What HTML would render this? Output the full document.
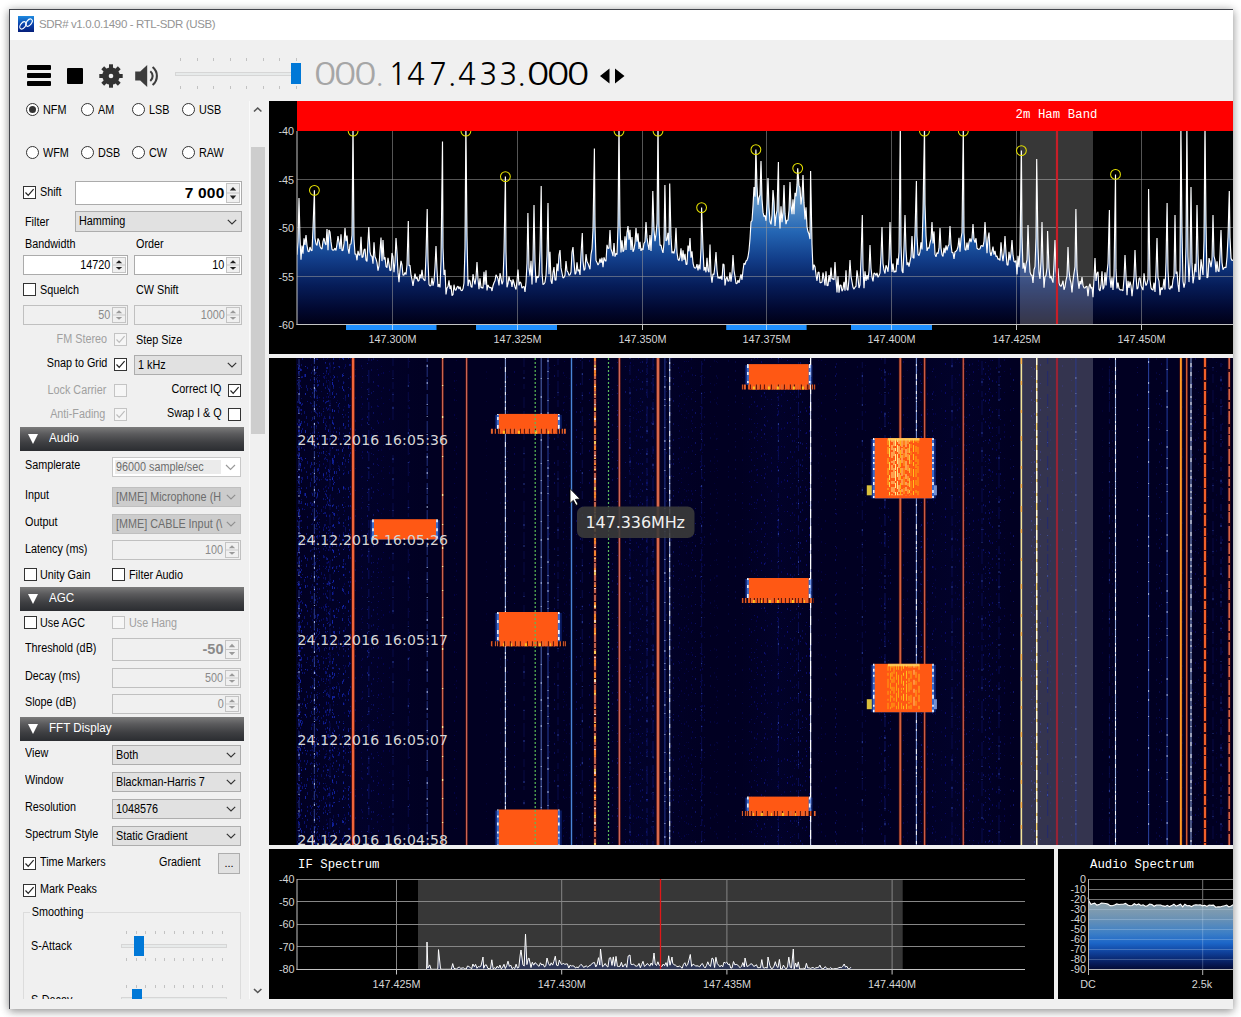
<!DOCTYPE html>
<html><head><meta charset="utf-8"><title>SDR# v1.0.0.1490 - RTL-SDR (USB)</title>
<style>
*{box-sizing:border-box;margin:0;padding:0}
html,body{width:1241px;height:1017px;overflow:hidden;background:#fff}
body{font-family:"Liberation Sans",sans-serif;font-size:11px;color:#000;position:relative}
#win{position:absolute;left:9px;top:9px;width:1224px;height:1000px;background:#f0f0f0;border-left:1px solid #43454c;border-top:1px solid #43454c;box-shadow:0 1px 9px 0 rgba(0,0,0,.3),0 3px 8px rgba(0,0,0,.2);overflow:hidden}
#page{position:absolute;left:0;top:0;width:1241px;height:1017px}
.a{position:absolute;white-space:nowrap}
#title{position:absolute;left:10px;top:10px;width:1223px;height:30px;background:#fff}
.lbl{position:absolute;white-space:nowrap;line-height:13px;height:13px;font-size:12px;transform:scaleX(.9);transform-origin:0 50%}
.r{text-align:right;transform-origin:100% 50%}
.dis{color:#a0a0a0}
.rad{position:absolute;width:13px;height:13px;border:1px solid #333;border-radius:50%;background:#fff}
.rad.on:after{content:"";position:absolute;left:2px;top:2px;width:7px;height:7px;border-radius:50%;background:#333}
.cb{position:absolute;width:13px;height:13px;border:1px solid #333;background:#fff}
.cb.d{border-color:#c4c4c4;background:#f6f6f6}
.cb svg{position:absolute;left:0;top:0}
.num{position:absolute;border:1px solid #ababab;background:#fff}
.num.d{background:#f0f0f0;border-color:#c0c0c0}
.num .v{position:absolute;right:16.5px;top:0;white-space:nowrap;font-size:12px;transform:scaleX(.9);transform-origin:100% 50%}
.spin{position:absolute;right:1px;top:1px;bottom:1px;width:14px;background:#f0f0f0;border:1px solid #c4c4c4}
.combo{position:absolute;border:1px solid #adadad;background:#e1e1e1}
.combo.d{background:#cccccc;border-color:#bfbfbf;color:#6d6d6d}
.combo .t{position:absolute;left:3px;top:0;white-space:nowrap;font-size:12px;transform:scaleX(.9);transform-origin:0 50%}
.combo svg{position:absolute;right:4px;top:50%;margin-top:-3px}
.hdr{position:absolute;left:20px;width:224px;height:24px;background:linear-gradient(#7b7b7b 0%,#5a5a5c 30%,#3e3f42 65%,#2b2d31 100%);color:#fff;font-size:12px}
.hdr span{position:absolute;left:29px;top:3.5px;line-height:14px;transform:scaleX(.97);transform-origin:0 50%}
.hdr i{position:absolute;left:8px;top:7px;width:0;height:0;border-left:5px solid transparent;border-right:5px solid transparent;border-top:10px solid #fff}
.tick{position:absolute;width:1px;height:3px;background:#c2c2c2}
</style></head>
<body>
<div id="win"></div>
<div id="page">
<div id="title"></div>
<svg class="a" style="left:18px;top:16px" width="16" height="16" viewBox="0 0 17 17"><defs><linearGradient id="ig" x1="0" y1="0" x2="0" y2="1"><stop offset="0" stop-color="#1e8be0"/><stop offset="0.55" stop-color="#0a3fa8"/><stop offset="1" stop-color="#061f7a"/></linearGradient></defs><rect width="17" height="17" fill="url(#ig)"/><ellipse cx="5.3" cy="10" rx="2.6" ry="4.4" transform="rotate(38 5.3 10)" fill="none" stroke="#fff" stroke-width="1.2"/><ellipse cx="11.7" cy="7" rx="2.6" ry="4.4" transform="rotate(38 11.7 7)" fill="none" stroke="#fff" stroke-width="1.2"/></svg>
<div class="a" style="left:39px;top:17px;font-size:11.5px;line-height:15px;color:#949494;letter-spacing:-0.38px">SDR# v1.0.0.1490 - RTL-SDR (USB)</div>
<div class="a" style="left:27px;top:65px;width:24px;height:5px;background:#000;border-radius:1px"></div>
<div class="a" style="left:27px;top:73px;width:24px;height:5px;background:#000;border-radius:1px"></div>
<div class="a" style="left:27px;top:81px;width:24px;height:5px;background:#000;border-radius:1px"></div>
<div class="a" style="left:67px;top:68px;width:16px;height:16px;background:#000;border-radius:1px"></div>
<svg class="a" style="left:0;top:0" width="330" height="100"><circle cx="111" cy="76" r="8.7" fill="#333"/><rect x="109" y="64.3" width="4" height="6" fill="#333" transform="rotate(0 111 76)"/><rect x="109" y="64.3" width="4" height="6" fill="#333" transform="rotate(45 111 76)"/><rect x="109" y="64.3" width="4" height="6" fill="#333" transform="rotate(90 111 76)"/><rect x="109" y="64.3" width="4" height="6" fill="#333" transform="rotate(135 111 76)"/><rect x="109" y="64.3" width="4" height="6" fill="#333" transform="rotate(180 111 76)"/><rect x="109" y="64.3" width="4" height="6" fill="#333" transform="rotate(225 111 76)"/><rect x="109" y="64.3" width="4" height="6" fill="#333" transform="rotate(270 111 76)"/><rect x="109" y="64.3" width="4" height="6" fill="#333" transform="rotate(315 111 76)"/><circle cx="111" cy="76" r="2.3" fill="#f0f0f0"/><path fill="#3c3c3c" d="M135.2 71.4 h5 l7 -6.4 v22 l-7 -6.5 h-5Z"/><path fill="none" stroke="#3c3c3c" stroke-width="2.1" d="M150.3 71.2 a6.3 6.3 0 0 1 0 9.8 M152.6 67 a11.6 11.6 0 0 1 0 18"/></svg>
<div class="tick" style="left:180.0px;top:58px"></div><div class="tick" style="left:180.0px;top:86px"></div>
<div class="tick" style="left:196.6px;top:58px"></div><div class="tick" style="left:196.6px;top:86px"></div>
<div class="tick" style="left:213.1px;top:58px"></div><div class="tick" style="left:213.1px;top:86px"></div>
<div class="tick" style="left:229.7px;top:58px"></div><div class="tick" style="left:229.7px;top:86px"></div>
<div class="tick" style="left:246.2px;top:58px"></div><div class="tick" style="left:246.2px;top:86px"></div>
<div class="tick" style="left:262.8px;top:58px"></div><div class="tick" style="left:262.8px;top:86px"></div>
<div class="tick" style="left:279.3px;top:58px"></div><div class="tick" style="left:279.3px;top:86px"></div>
<div class="tick" style="left:295.9px;top:58px"></div><div class="tick" style="left:295.9px;top:86px"></div>
<div class="a" style="left:175px;top:72px;width:126px;height:4px;background:#e7eaea;border:1px solid #d6d6d6"></div>
<div class="a" style="left:291px;top:63px;width:10px;height:21px;background:#0078d7"></div>
<svg class="a" style="left:0;top:0" width="700" height="100" font-size="29.9"><text y="85" font-family="'NanumGothic','DejaVu Sans',sans-serif" fill="#000"><tspan fill="#a6a6a6"><tspan x="313.76" textLength="22.66" lengthAdjust="spacingAndGlyphs">0</tspan><tspan x="333.86" textLength="22.66" lengthAdjust="spacingAndGlyphs">0</tspan><tspan x="353.96" textLength="22.66" lengthAdjust="spacingAndGlyphs">0</tspan><tspan x="374.91">.</tspan></tspan><tspan x="388.31 407.10 428.91 447.51 458.10 479.21 499.21 517.01">147.433.</tspan><tspan x="526.76" textLength="22.66" lengthAdjust="spacingAndGlyphs">0</tspan><tspan x="546.76" textLength="22.66" lengthAdjust="spacingAndGlyphs">0</tspan><tspan x="566.76" textLength="22.66" lengthAdjust="spacingAndGlyphs">0</tspan></text><path d="M609.5 68.5 v15 l-9.5 -7.5Z M615 68.5 v15 l9.5 -7.5Z" fill="#000"/></svg>
<div class="rad on" style="left:26px;top:103px"></div>
<div class="lbl " style="left:42.6px;top:103.6px;">NFM</div>
<div class="rad" style="left:81px;top:103px"></div>
<div class="lbl " style="left:97.6px;top:103.6px;">AM</div>
<div class="rad" style="left:132px;top:103px"></div>
<div class="lbl " style="left:148.6px;top:103.6px;">LSB</div>
<div class="rad" style="left:182px;top:103px"></div>
<div class="lbl " style="left:198.6px;top:103.6px;">USB</div>
<div class="rad" style="left:26px;top:146px"></div>
<div class="lbl " style="left:42.6px;top:146.6px;">WFM</div>
<div class="rad" style="left:81px;top:146px"></div>
<div class="lbl " style="left:97.6px;top:146.6px;">DSB</div>
<div class="rad" style="left:132px;top:146px"></div>
<div class="lbl " style="left:148.6px;top:146.6px;">CW</div>
<div class="rad" style="left:182px;top:146px"></div>
<div class="lbl " style="left:198.6px;top:146.6px;">RAW</div>
<div class="cb" style="left:23px;top:186px"><svg width="11" height="11" viewBox="0 0 11 11"><path d="M1.5 5.5 L4.2 8.3 L9.6 2.2" fill="none" stroke="#222" stroke-width="1.2"/></svg></div>
<div class="lbl " style="left:39.6px;top:186.1px;">Shift</div>
<div class="num" style="left:75px;top:181px;width:167px;height:24px"><div class="v" style="line-height:22px;font-weight:bold;font-size:15.5px;letter-spacing:0.2px;transform:none">7 000</div><div class="spin"><svg width="12" height="100%" viewBox="0.5 0 12 18" preserveAspectRatio="none" style="position:absolute;left:0;top:0;height:100%"><path d="M0 9H13" stroke="#c4c4c4" stroke-width="1"/><path d="M3.3 6.6 L6.5 3 L9.7 6.6Z M3.3 11.6 L6.5 15.2 L9.7 11.6Z" fill="#222"/></svg></div></div>
<div class="lbl " style="left:24.6px;top:215.6px;">Filter</div>
<div class="combo" style="left:75px;top:211px;width:167px;height:21px;"><div class="t" style="line-height:19px">Hamming</div><svg width="10" height="6" viewBox="0 0 10 6"><path d="M0.8 0.8 L5 5 L9.2 0.8" fill="none" stroke="#333" stroke-width="1.15"/></svg></div>
<div class="lbl " style="left:24.6px;top:238.1px;">Bandwidth</div>
<div class="lbl " style="left:135.6px;top:238.1px;">Order</div>
<div class="num" style="left:23px;top:255px;width:105px;height:20px"><div class="v" style="line-height:18px;">14720</div><div class="spin"><svg width="12" height="100%" viewBox="0.5 0 12 18" preserveAspectRatio="none" style="position:absolute;left:0;top:0;height:100%"><path d="M0 9H13" stroke="#c4c4c4" stroke-width="1"/><path d="M3.3 6.6 L6.5 3 L9.7 6.6Z M3.3 11.6 L6.5 15.2 L9.7 11.6Z" fill="#222"/></svg></div></div>
<div class="num" style="left:134px;top:255px;width:108px;height:20px"><div class="v" style="line-height:18px;">10</div><div class="spin"><svg width="12" height="100%" viewBox="0.5 0 12 18" preserveAspectRatio="none" style="position:absolute;left:0;top:0;height:100%"><path d="M0 9H13" stroke="#c4c4c4" stroke-width="1"/><path d="M3.3 6.6 L6.5 3 L9.7 6.6Z M3.3 11.6 L6.5 15.2 L9.7 11.6Z" fill="#222"/></svg></div></div>
<div class="cb" style="left:23px;top:283px"></div>
<div class="lbl " style="left:39.6px;top:283.6px;">Squelch</div>
<div class="lbl " style="left:135.6px;top:284.1px;">CW Shift</div>
<div class="num d" style="left:23px;top:305px;width:105px;height:20px"><div class="v" style="line-height:18px;color:#8a8a8a;">50</div><div class="spin"><svg width="12" height="100%" viewBox="0.5 0 12 18" preserveAspectRatio="none" style="position:absolute;left:0;top:0;height:100%"><path d="M0 9H13" stroke="#c4c4c4" stroke-width="1"/><path d="M3.3 6.6 L6.5 3 L9.7 6.6Z M3.3 11.6 L6.5 15.2 L9.7 11.6Z" fill="#9a9a9a"/></svg></div></div>
<div class="num d" style="left:134px;top:305px;width:108px;height:20px"><div class="v" style="line-height:18px;color:#8a8a8a;">1000</div><div class="spin"><svg width="12" height="100%" viewBox="0.5 0 12 18" preserveAspectRatio="none" style="position:absolute;left:0;top:0;height:100%"><path d="M0 9H13" stroke="#c4c4c4" stroke-width="1"/><path d="M3.3 6.6 L6.5 3 L9.7 6.6Z M3.3 11.6 L6.5 15.2 L9.7 11.6Z" fill="#9a9a9a"/></svg></div></div>
<div class="lbl r dis" style="right:1133.5px;top:332.5px;">FM Stereo</div>
<div class="cb d" style="left:114px;top:333px"><svg width="11" height="11" viewBox="0 0 11 11"><path d="M1.5 5.5 L4.2 8.3 L9.6 2.2" fill="none" stroke="#bdbdbd" stroke-width="1.2"/></svg></div>
<div class="lbl " style="left:135.6px;top:334.1px;">Step Size</div>
<div class="lbl r " style="right:1133.5px;top:357.0px;">Snap to Grid</div>
<div class="cb" style="left:114px;top:358px"><svg width="11" height="11" viewBox="0 0 11 11"><path d="M1.5 5.5 L4.2 8.3 L9.6 2.2" fill="none" stroke="#222" stroke-width="1.2"/></svg></div>
<div class="combo" style="left:134px;top:355px;width:108px;height:20px;"><div class="t" style="line-height:18px">1 kHz</div><svg width="10" height="6" viewBox="0 0 10 6"><path d="M0.8 0.8 L5 5 L9.2 0.8" fill="none" stroke="#333" stroke-width="1.15"/></svg></div>
<div class="lbl r dis" style="right:1134.5px;top:383.5px;">Lock Carrier</div>
<div class="cb d" style="left:114px;top:384px"></div>
<div class="lbl r " style="right:1019.5px;top:383.0px;">Correct IQ</div>
<div class="cb" style="left:228px;top:384px"><svg width="11" height="11" viewBox="0 0 11 11"><path d="M1.5 5.5 L4.2 8.3 L9.6 2.2" fill="none" stroke="#222" stroke-width="1.2"/></svg></div>
<div class="lbl r dis" style="right:1135.5px;top:407.5px;">Anti-Fading</div>
<div class="cb d" style="left:114px;top:408px"><svg width="11" height="11" viewBox="0 0 11 11"><path d="M1.5 5.5 L4.2 8.3 L9.6 2.2" fill="none" stroke="#bdbdbd" stroke-width="1.2"/></svg></div>
<div class="lbl r " style="right:1019.5px;top:407.0px;">Swap I &amp; Q</div>
<div class="cb" style="left:228px;top:407.5px"></div>
<div class="hdr" style="top:427px"><i></i><span>Audio</span></div>
<div class="lbl " style="left:24.6px;top:459.1px;">Samplerate</div>
<div class="combo" style="left:112px;top:457px;width:129px;height:20px;background:#fff;border-color:#c8c8c8;color:#6d6d6d"><div style="position:absolute;left:2px;top:2px;width:106px;height:14px;background:#ebebeb"></div><div class="t" style="line-height:18px">96000 sample/sec</div><svg width="11" height="7" viewBox="0 0 11 7"><path d="M1 1 L5.5 5.5 L10 1" fill="none" stroke="#9a9a9a" stroke-width="1.2"/></svg></div>
<div class="lbl " style="left:24.6px;top:489.1px;">Input</div>
<div class="combo d" style="left:112px;top:487px;width:129px;height:20px;"><div class="t" style="line-height:18px">[MME] Microphone (H</div><svg width="10" height="6" viewBox="0 0 10 6"><path d="M0.8 0.8 L5 5 L9.2 0.8" fill="none" stroke="#8f8f8f" stroke-width="1.15"/></svg></div>
<div class="lbl " style="left:24.6px;top:516.1px;">Output</div>
<div class="combo d" style="left:112px;top:513.5px;width:129px;height:20px;"><div class="t" style="line-height:18px">[MME] CABLE Input (\</div><svg width="10" height="6" viewBox="0 0 10 6"><path d="M0.8 0.8 L5 5 L9.2 0.8" fill="none" stroke="#8f8f8f" stroke-width="1.15"/></svg></div>
<div class="lbl " style="left:24.6px;top:542.6px;">Latency (ms)</div>
<div class="num d" style="left:112px;top:540px;width:129px;height:20px"><div class="v" style="line-height:18px;color:#8a8a8a;">100</div><div class="spin"><svg width="12" height="100%" viewBox="0.5 0 12 18" preserveAspectRatio="none" style="position:absolute;left:0;top:0;height:100%"><path d="M0 9H13" stroke="#c4c4c4" stroke-width="1"/><path d="M3.3 6.6 L6.5 3 L9.7 6.6Z M3.3 11.6 L6.5 15.2 L9.7 11.6Z" fill="#9a9a9a"/></svg></div></div>
<div class="cb" style="left:23.5px;top:568px"></div>
<div class="lbl " style="left:39.6px;top:568.6px;">Unity Gain</div>
<div class="cb" style="left:112px;top:568px"></div>
<div class="lbl " style="left:128.6px;top:568.6px;">Filter Audio</div>
<div class="hdr" style="top:587px"><i></i><span>AGC</span></div>
<div class="cb" style="left:23.5px;top:616px"></div>
<div class="lbl " style="left:39.6px;top:616.6px;">Use AGC</div>
<div class="cb d" style="left:112px;top:616px"></div>
<div class="lbl dis" style="left:128.6px;top:616.6px;">Use Hang</div>
<div class="lbl " style="left:24.6px;top:641.6px;">Threshold (dB)</div>
<div class="num d" style="left:112px;top:638px;width:129px;height:23px"><div class="v" style="line-height:21px;color:#8a8a8a;font-weight:bold;font-size:14.5px;letter-spacing:0px;transform:none">-50</div><div class="spin"><svg width="12" height="100%" viewBox="0.5 0 12 18" preserveAspectRatio="none" style="position:absolute;left:0;top:0;height:100%"><path d="M0 9H13" stroke="#c4c4c4" stroke-width="1"/><path d="M3.3 6.6 L6.5 3 L9.7 6.6Z M3.3 11.6 L6.5 15.2 L9.7 11.6Z" fill="#9a9a9a"/></svg></div></div>
<div class="lbl " style="left:24.6px;top:670.1px;">Decay (ms)</div>
<div class="num d" style="left:112px;top:668px;width:129px;height:20px"><div class="v" style="line-height:18px;color:#8a8a8a;">500</div><div class="spin"><svg width="12" height="100%" viewBox="0.5 0 12 18" preserveAspectRatio="none" style="position:absolute;left:0;top:0;height:100%"><path d="M0 9H13" stroke="#c4c4c4" stroke-width="1"/><path d="M3.3 6.6 L6.5 3 L9.7 6.6Z M3.3 11.6 L6.5 15.2 L9.7 11.6Z" fill="#9a9a9a"/></svg></div></div>
<div class="lbl " style="left:24.6px;top:696.1px;">Slope (dB)</div>
<div class="num d" style="left:112px;top:694px;width:129px;height:20px"><div class="v" style="line-height:18px;color:#8a8a8a;">0</div><div class="spin"><svg width="12" height="100%" viewBox="0.5 0 12 18" preserveAspectRatio="none" style="position:absolute;left:0;top:0;height:100%"><path d="M0 9H13" stroke="#c4c4c4" stroke-width="1"/><path d="M3.3 6.6 L6.5 3 L9.7 6.6Z M3.3 11.6 L6.5 15.2 L9.7 11.6Z" fill="#9a9a9a"/></svg></div></div>
<div class="hdr" style="top:717px"><i></i><span>FFT Display</span></div>
<div class="lbl " style="left:24.6px;top:747.1px;">View</div>
<div class="combo" style="left:112px;top:744.5px;width:129px;height:20px;"><div class="t" style="line-height:18px">Both</div><svg width="10" height="6" viewBox="0 0 10 6"><path d="M0.8 0.8 L5 5 L9.2 0.8" fill="none" stroke="#333" stroke-width="1.15"/></svg></div>
<div class="lbl " style="left:24.6px;top:774.1px;">Window</div>
<div class="combo" style="left:112px;top:771.5px;width:129px;height:20px;"><div class="t" style="line-height:18px">Blackman-Harris 7</div><svg width="10" height="6" viewBox="0 0 10 6"><path d="M0.8 0.8 L5 5 L9.2 0.8" fill="none" stroke="#333" stroke-width="1.15"/></svg></div>
<div class="lbl " style="left:24.6px;top:801.1px;">Resolution</div>
<div class="combo" style="left:112px;top:798.5px;width:129px;height:20px;"><div class="t" style="line-height:18px">1048576</div><svg width="10" height="6" viewBox="0 0 10 6"><path d="M0.8 0.8 L5 5 L9.2 0.8" fill="none" stroke="#333" stroke-width="1.15"/></svg></div>
<div class="lbl " style="left:24.6px;top:828.1px;">Spectrum Style</div>
<div class="combo" style="left:112px;top:825.5px;width:129px;height:20px;"><div class="t" style="line-height:18px">Static Gradient</div><svg width="10" height="6" viewBox="0 0 10 6"><path d="M0.8 0.8 L5 5 L9.2 0.8" fill="none" stroke="#333" stroke-width="1.15"/></svg></div>
<div class="cb" style="left:23px;top:856.5px"><svg width="11" height="11" viewBox="0 0 11 11"><path d="M1.5 5.5 L4.2 8.3 L9.6 2.2" fill="none" stroke="#222" stroke-width="1.2"/></svg></div>
<div class="lbl " style="left:39.6px;top:856.0px;">Time Markers</div>
<div class="lbl " style="left:159.1px;top:856.0px;">Gradient</div>
<div class="a" style="left:218px;top:853px;width:22px;height:21px;background:#e1e1e1;border:1px solid #adadad;text-align:center;line-height:18px">...</div>
<div class="cb" style="left:23px;top:883.5px"><svg width="11" height="11" viewBox="0 0 11 11"><path d="M1.5 5.5 L4.2 8.3 L9.6 2.2" fill="none" stroke="#222" stroke-width="1.2"/></svg></div>
<div class="lbl " style="left:39.6px;top:883.0px;">Mark Peaks</div>
<div class="a" style="left:23px;top:912px;width:218px;height:87px;border:1px solid #dcdcdc;border-bottom:none"></div>
<div class="lbl" style="left:30px;top:905.5px;background:#f0f0f0;padding:0 2px">Smoothing</div>
<div class="lbl " style="left:30.6px;top:940.1px;">S-Attack</div>
<div class="tick" style="left:126.0px;top:931px"></div><div class="tick" style="left:126.0px;top:958px"></div><div class="tick" style="left:126.0px;top:984.5px"></div>
<div class="tick" style="left:135.6px;top:931px"></div><div class="tick" style="left:135.6px;top:958px"></div><div class="tick" style="left:135.6px;top:984.5px"></div>
<div class="tick" style="left:145.1px;top:931px"></div><div class="tick" style="left:145.1px;top:958px"></div><div class="tick" style="left:145.1px;top:984.5px"></div>
<div class="tick" style="left:154.7px;top:931px"></div><div class="tick" style="left:154.7px;top:958px"></div><div class="tick" style="left:154.7px;top:984.5px"></div>
<div class="tick" style="left:164.2px;top:931px"></div><div class="tick" style="left:164.2px;top:958px"></div><div class="tick" style="left:164.2px;top:984.5px"></div>
<div class="tick" style="left:173.8px;top:931px"></div><div class="tick" style="left:173.8px;top:958px"></div><div class="tick" style="left:173.8px;top:984.5px"></div>
<div class="tick" style="left:183.3px;top:931px"></div><div class="tick" style="left:183.3px;top:958px"></div><div class="tick" style="left:183.3px;top:984.5px"></div>
<div class="tick" style="left:192.9px;top:931px"></div><div class="tick" style="left:192.9px;top:958px"></div><div class="tick" style="left:192.9px;top:984.5px"></div>
<div class="tick" style="left:202.4px;top:931px"></div><div class="tick" style="left:202.4px;top:958px"></div><div class="tick" style="left:202.4px;top:984.5px"></div>
<div class="tick" style="left:211.9px;top:931px"></div><div class="tick" style="left:211.9px;top:958px"></div><div class="tick" style="left:211.9px;top:984.5px"></div>
<div class="tick" style="left:221.5px;top:931px"></div><div class="tick" style="left:221.5px;top:958px"></div><div class="tick" style="left:221.5px;top:984.5px"></div>
<div class="a" style="left:121px;top:944px;width:106px;height:4px;background:#e7eaea;border:1px solid #d6d6d6"></div>
<div class="a" style="left:134px;top:935.5px;width:10px;height:20px;background:#0078d7"></div>
<div class="lbl " style="left:30.6px;top:994.1px;">S-Decay</div>
<div class="a" style="left:121px;top:997px;width:106px;height:4px;background:#e7eaea;border:1px solid #d6d6d6"></div>
<div class="a" style="left:132px;top:989px;width:10px;height:20px;background:#0078d7"></div>
<div class="a" style="left:10px;top:998.5px;width:240px;height:10.5px;background:#f0f0f0"></div>
<div class="a" style="left:249px;top:101px;width:1px;height:898px;background:#fafafa"></div>
<div class="a" style="left:250.5px;top:147px;width:14.5px;height:286.5px;background:#cdcdcd"></div>
<svg class="a" style="left:250px;top:101px" width="16" height="898"><path d="M4 10.5 L7.7 7 L11.4 10.5 M4 888 L7.7 891.5 L11.4 888" fill="none" stroke="#555" stroke-width="1.6"/></svg>
<svg class="a" style="left:269px;top:101px" width="964" height="253" viewBox="269 101 964 253" font-family="'Liberation Sans',sans-serif" font-size="10.8">
<defs><linearGradient id="sg" gradientUnits="userSpaceOnUse" x1="0" y1="131" x2="0" y2="324.5"><stop offset="0" stop-color="#ffffff"/><stop offset="0.18" stop-color="#b9cde0"/><stop offset="0.36" stop-color="#5f95c8"/><stop offset="0.52" stop-color="#2466b4"/><stop offset="0.66" stop-color="#123e8a"/><stop offset="0.80" stop-color="#061c58"/><stop offset="0.92" stop-color="#010830"/><stop offset="1" stop-color="#000016"/></linearGradient><clipPath id="sc"><rect x="297" y="131" width="936" height="194"/></clipPath></defs>
<rect x="269" y="101" width="964" height="253" fill="#000"/>
<g clip-path="url(#sc)">
<path d="M297.0 254.8 L298.0 242.0 L299.0 198.0 L300.0 238.2 L301.0 259.8 L302.0 245.6 L303.0 253.6 L304.0 238.4 L305.0 245.0 L306.0 235.0 L307.0 245.6 L308.0 251.2 L309.0 251.8 L310.0 247.0 L311.0 250.2 L312.0 250.6 L313.0 228.5 L314.4 190.3 L315.0 238.2 L316.0 243.9 L317.0 245.5 L318.0 238.4 L319.0 240.4 L320.0 246.2 L321.0 248.2 L322.0 249.0 L323.0 241.4 L324.0 238.0 L325.0 243.0 L326.0 244.9 L327.0 229.0 L328.0 250.1 L329.0 230.1 L330.0 232.0 L331.0 241.9 L332.0 249.4 L333.0 250.2 L334.0 249.9 L335.0 248.1 L336.0 250.5 L337.0 243.8 L338.0 236.0 L339.0 242.1 L340.0 249.0 L341.0 234.2 L342.0 250.6 L343.0 250.3 L344.0 243.4 L345.0 228.0 L346.0 241.1 L347.0 235.5 L348.0 248.4 L349.0 253.7 L350.0 244.3 L351.0 244.0 L352.0 235.1 L353.0 126.0 L354.0 239.2 L355.0 254.1 L356.0 254.1 L357.0 260.3 L358.0 250.9 L359.0 255.2 L360.0 254.9 L361.0 236.9 L362.0 257.5 L363.0 256.8 L364.0 250.0 L365.0 248.9 L366.0 260.1 L367.0 261.4 L368.0 241.0 L368.8 227.0 L370.0 251.8 L371.0 255.8 L372.0 256.2 L373.0 263.7 L374.0 242.4 L375.0 256.8 L376.0 258.9 L377.0 262.7 L378.0 270.6 L379.0 265.8 L380.0 250.6 L381.0 237.5 L382.0 261.1 L383.0 240.0 L384.0 259.5 L385.0 257.2 L386.0 266.6 L387.0 267.7 L388.0 257.8 L389.0 263.8 L390.0 270.7 L391.0 270.0 L392.0 253.0 L393.0 256.9 L394.0 272.3 L395.0 262.3 L396.0 238.0 L397.0 252.2 L398.0 272.4 L399.0 282.2 L400.0 269.7 L401.0 260.9 L402.0 264.9 L403.0 275.2 L404.0 275.0 L405.0 272.4 L406.0 274.6 L407.0 264.7 L408.3 221.0 L409.0 265.8 L410.0 265.3 L411.0 275.2 L412.0 279.6 L413.0 285.8 L414.0 279.4 L415.0 273.7 L416.0 279.0 L417.0 277.1 L418.0 281.2 L419.0 280.6 L420.0 274.4 L421.0 278.4 L422.0 269.8 L423.0 278.3 L424.0 279.9 L425.0 280.8 L426.0 255.0 L427.2 209.0 L428.0 260.0 L429.0 284.5 L430.0 285.9 L431.0 285.5 L432.0 277.8 L433.0 285.6 L434.0 280.9 L435.0 267.1 L436.0 246.0 L437.0 269.7 L438.0 287.0 L439.0 284.3 L440.0 287.4 L441.0 260.9 L442.5 141.6 L443.0 247.4 L444.0 275.0 L445.0 269.8 L446.0 294.4 L447.0 287.8 L448.0 286.6 L449.0 280.4 L450.0 289.0 L451.0 285.3 L452.0 295.7 L453.0 294.7 L454.0 284.7 L455.0 289.9 L456.0 290.1 L457.0 287.2 L458.0 286.2 L459.0 289.0 L460.0 286.7 L461.0 290.3 L462.0 290.7 L463.0 288.8 L464.0 283.0 L465.0 247.4 L465.9 126.0 L467.0 236.2 L468.0 286.1 L469.0 279.8 L470.0 280.9 L471.0 286.5 L472.0 287.4 L473.0 274.2 L474.0 280.1 L475.0 284.3 L476.0 277.3 L477.0 262.0 L478.0 279.2 L479.0 289.1 L480.0 278.2 L481.0 287.6 L482.0 287.4 L483.0 288.3 L484.0 271.7 L485.0 284.7 L486.0 270.4 L487.0 290.5 L488.0 284.9 L489.0 286.9 L490.0 287.9 L491.0 287.1 L492.0 291.0 L493.0 285.7 L494.0 282.8 L495.0 280.8 L496.0 274.8 L497.0 276.5 L498.0 278.8 L499.0 285.4 L500.0 273.2 L501.0 277.9 L502.0 284.2 L503.0 281.4 L504.0 251.5 L505.4 176.6 L506.0 251.6 L507.0 287.3 L508.0 283.7 L509.0 276.4 L510.0 281.0 L511.0 280.4 L512.0 286.8 L513.0 279.4 L514.0 283.0 L515.0 287.0 L516.0 289.5 L517.0 280.5 L518.0 269.6 L519.0 285.4 L520.0 281.9 L521.0 283.2 L522.0 288.1 L523.0 286.9 L524.0 286.4 L525.0 291.9 L526.0 282.1 L527.0 263.0 L527.9 213.0 L529.0 268.7 L530.0 275.6 L531.0 260.7 L532.0 284.4 L533.0 259.8 L534.0 205.0 L535.0 261.5 L536.0 282.7 L537.0 276.0 L538.0 277.9 L539.0 275.3 L540.0 250.3 L541.2 186.0 L542.0 272.6 L543.0 284.6 L544.0 283.9 L545.0 282.2 L546.0 275.3 L547.0 255.3 L548.0 203.0 L549.0 274.3 L550.0 251.7 L551.0 280.8 L552.0 283.7 L553.0 272.6 L554.0 267.0 L555.0 279.9 L556.0 280.1 L557.0 263.6 L558.0 271.2 L559.0 255.0 L560.0 250.0 L561.0 267.9 L562.0 273.0 L563.0 278.0 L564.0 277.2 L565.0 275.2 L566.0 261.1 L567.0 270.9 L568.0 272.1 L569.0 275.3 L570.0 274.8 L571.0 272.0 L572.0 252.0 L573.0 247.0 L574.0 261.6 L575.0 274.3 L576.0 272.9 L577.0 262.3 L578.0 271.1 L579.0 269.7 L580.0 275.0 L581.0 254.4 L582.3 233.0 L583.0 260.8 L584.0 270.4 L585.0 268.9 L586.0 254.2 L587.0 261.5 L588.0 263.4 L589.0 266.2 L590.0 269.2 L591.0 254.3 L592.0 249.1 L593.0 229.4 L594.4 148.4 L595.0 225.7 L596.0 260.5 L597.0 262.4 L598.0 265.0 L599.0 263.3 L600.0 258.5 L601.0 263.0 L602.0 257.7 L603.0 267.2 L604.0 257.4 L605.0 260.4 L606.0 261.2 L607.0 244.9 L608.0 248.4 L609.0 248.2 L610.0 230.0 L611.0 249.0 L612.0 252.1 L613.0 256.1 L614.0 243.0 L615.0 256.6 L616.0 253.3 L617.0 254.6 L618.0 226.4 L619.0 126.0 L620.0 225.4 L621.0 252.4 L622.0 240.4 L623.0 251.8 L624.0 249.9 L625.0 236.4 L626.0 249.9 L627.0 232.5 L628.0 226.0 L629.0 239.8 L630.0 229.7 L631.0 250.0 L632.0 237.0 L633.0 251.8 L634.0 249.3 L635.0 242.8 L636.0 228.0 L637.0 241.8 L638.0 233.2 L639.0 249.0 L640.0 241.8 L641.0 250.9 L642.0 248.5 L643.0 249.9 L644.0 243.2 L645.0 241.6 L646.0 222.0 L647.0 237.9 L648.0 244.5 L649.0 250.0 L650.0 235.0 L651.0 251.0 L652.0 230.9 L652.8 191.0 L654.0 230.1 L655.0 241.1 L656.0 234.5 L657.0 223.5 L658.0 126.0 L659.0 225.8 L660.0 245.5 L661.0 245.1 L662.0 249.7 L663.0 252.9 L664.0 242.7 L664.9 185.0 L666.0 241.0 L667.0 239.6 L668.0 232.8 L669.0 245.1 L669.7 183.5 L671.0 236.9 L672.0 253.3 L673.0 251.4 L674.0 253.4 L675.0 248.0 L676.0 228.0 L677.0 252.6 L678.0 259.4 L679.0 260.5 L680.0 257.1 L681.0 248.4 L682.0 261.2 L683.0 250.2 L684.0 260.0 L685.0 253.9 L686.0 264.3 L687.0 264.3 L688.0 245.6 L689.0 251.3 L690.0 238.0 L691.0 257.6 L692.0 251.4 L693.0 263.0 L694.0 267.1 L695.0 268.1 L696.0 267.8 L697.0 264.1 L698.0 270.4 L699.0 264.7 L700.0 269.4 L701.0 248.2 L701.6 207.6 L703.0 249.0 L704.0 270.7 L705.0 267.2 L706.0 272.3 L707.0 257.7 L708.0 270.3 L709.0 272.3 L710.0 244.4 L711.0 274.9 L712.0 282.7 L713.0 273.9 L714.0 274.4 L715.0 265.0 L716.0 252.0 L717.0 270.2 L718.0 278.4 L719.0 276.7 L720.0 278.8 L721.0 276.0 L722.0 279.8 L723.0 263.9 L724.0 264.7 L725.0 285.4 L726.0 279.0 L727.0 276.6 L728.0 281.2 L729.0 281.0 L730.0 272.4 L731.0 281.8 L732.0 273.2 L733.0 255.0 L734.0 270.3 L735.0 276.7 L736.0 283.4 L737.0 283.7 L738.0 280.2 L739.0 282.9 L740.0 278.6 L741.0 274.4 L742.0 279.8 L743.0 270.5 L744.0 263.2 L745.0 264.6 L746.0 261.0 L747.0 260.2 L748.0 257.0 L749.0 250.3 L750.0 238.8 L751.0 221.9 L752.0 220.7 L753.0 206.0 L754.0 187.0 L755.0 196.7 L755.9 149.6 L757.0 186.1 L758.0 204.8 L759.0 197.6 L760.0 195.0 L761.0 161.0 L762.0 199.1 L763.0 212.4 L764.0 216.5 L765.0 215.5 L766.0 220.8 L767.0 203.7 L768.0 178.0 L769.0 207.1 L770.0 221.5 L771.0 224.4 L772.0 215.2 L773.0 190.0 L774.0 201.2 L775.0 226.0 L776.0 215.5 L777.0 210.7 L778.4 162.0 L779.0 211.1 L780.0 228.4 L781.0 206.4 L782.0 222.3 L783.0 212.1 L784.0 185.0 L785.0 213.9 L786.0 224.1 L787.0 220.2 L788.0 220.3 L789.0 210.2 L790.0 182.0 L791.0 205.8 L792.0 214.1 L793.0 199.3 L794.0 214.3 L795.0 192.9 L796.0 196.3 L797.0 184.9 L797.7 168.3 L799.0 185.4 L800.0 187.8 L801.0 204.4 L802.0 196.2 L803.0 175.0 L804.0 202.9 L805.0 219.5 L806.0 207.4 L807.0 226.8 L808.0 231.8 L809.0 234.1 L810.0 239.1 L810.6 171.0 L812.0 244.5 L813.0 270.2 L814.0 264.7 L815.0 266.8 L816.0 274.8 L817.0 280.8 L818.0 272.6 L819.0 272.0 L820.0 282.6 L821.0 282.6 L822.0 282.0 L823.0 272.6 L824.0 278.6 L825.0 285.5 L826.0 271.4 L827.0 285.4 L828.0 285.7 L829.0 275.1 L830.0 282.0 L831.0 267.5 L832.0 279.0 L833.0 278.7 L834.0 280.0 L835.0 262.0 L836.0 279.4 L837.0 292.4 L838.0 276.4 L839.0 292.6 L840.0 285.0 L841.0 285.2 L842.0 291.2 L843.0 288.9 L844.0 281.8 L845.0 290.6 L846.0 270.2 L847.0 289.3 L848.0 290.2 L849.0 278.8 L850.0 260.0 L851.0 276.3 L852.0 281.8 L853.0 287.3 L854.0 289.1 L855.0 287.2 L856.0 286.3 L857.0 270.3 L858.0 277.9 L859.0 288.0 L860.0 284.8 L861.0 259.1 L862.3 215.0 L863.0 267.7 L864.0 288.1 L865.0 271.3 L866.0 280.9 L867.0 275.2 L868.0 279.6 L869.0 271.0 L870.0 245.0 L871.0 268.3 L872.0 277.1 L873.0 281.4 L874.0 273.0 L875.0 273.5 L876.0 275.5 L877.0 272.9 L878.0 277.3 L879.0 275.5 L880.0 273.1 L881.0 255.5 L882.0 227.0 L883.0 263.6 L884.0 270.2 L885.0 273.5 L886.0 265.3 L887.0 267.7 L888.0 271.8 L889.0 258.9 L890.0 222.0 L891.0 254.6 L892.0 272.0 L893.0 263.5 L894.0 272.5 L895.0 271.0 L896.0 272.0 L897.0 258.3 L898.0 264.9 L899.0 252.0 L900.3 126.0 L901.0 245.4 L902.0 270.8 L903.0 272.9 L904.0 247.8 L905.0 215.0 L906.0 249.7 L907.0 265.1 L908.0 262.5 L909.0 266.6 L910.0 261.4 L911.0 256.6 L912.0 236.0 L913.0 257.6 L914.0 258.2 L915.0 233.0 L916.4 181.0 L917.0 236.0 L918.0 254.4 L919.0 255.7 L920.0 252.2 L921.0 242.4 L922.0 249.4 L923.0 211.9 L924.5 126.0 L925.0 204.2 L926.0 235.6 L927.0 250.9 L928.0 247.6 L929.0 248.4 L930.0 243.0 L931.0 239.2 L932.0 222.0 L933.0 243.4 L934.0 231.4 L935.0 254.4 L936.0 256.9 L937.0 252.6 L938.0 253.6 L939.0 248.2 L940.0 228.0 L941.0 248.0 L942.0 254.7 L943.0 256.4 L944.0 247.7 L945.0 253.1 L946.0 245.3 L947.0 250.3 L948.0 246.3 L949.0 244.6 L950.0 226.0 L951.0 244.1 L952.0 252.7 L953.0 252.5 L954.0 259.0 L955.0 251.7 L956.0 251.2 L957.0 249.8 L958.0 246.7 L959.0 237.8 L960.0 251.7 L961.0 238.7 L962.0 232.7 L963.3 126.0 L964.0 232.7 L965.0 249.5 L966.0 250.2 L967.0 242.7 L968.0 249.9 L969.0 242.1 L970.0 238.4 L971.0 242.1 L972.0 238.1 L973.0 224.0 L974.0 239.5 L975.0 242.7 L976.0 238.2 L977.0 248.2 L978.0 249.0 L979.0 249.4 L980.0 248.7 L981.0 245.7 L982.0 245.5 L983.0 246.7 L984.0 241.3 L985.0 222.0 L986.0 237.9 L987.0 253.2 L988.0 238.2 L989.0 232.6 L990.0 251.7 L991.0 255.9 L992.0 251.4 L993.0 246.6 L994.0 254.7 L995.0 250.9 L996.0 256.6 L997.0 256.0 L998.0 259.3 L999.0 258.9 L1000.0 260.4 L1001.0 242.3 L1002.0 254.3 L1003.0 261.2 L1004.0 252.5 L1005.0 236.0 L1006.0 252.6 L1007.0 264.7 L1008.0 265.3 L1009.0 251.8 L1010.0 260.3 L1011.0 253.3 L1012.0 240.0 L1013.0 255.2 L1014.0 261.5 L1015.0 262.1 L1016.0 260.6 L1017.0 274.5 L1018.0 255.9 L1019.0 267.3 L1020.0 248.2 L1021.4 150.6 L1022.0 235.8 L1023.0 268.7 L1024.0 262.8 L1025.0 272.6 L1026.0 264.2 L1027.0 260.0 L1028.0 225.0 L1029.0 254.1 L1030.0 271.8 L1031.0 275.2 L1032.0 275.0 L1033.0 282.9 L1034.0 269.7 L1035.0 266.6 L1036.0 238.0 L1036.7 159.0 L1038.0 247.5 L1039.0 272.9 L1040.0 278.8 L1041.0 261.5 L1042.0 222.0 L1043.0 263.2 L1044.0 287.7 L1045.0 276.8 L1046.0 275.5 L1047.0 267.9 L1047.6 231.0 L1049.0 267.8 L1050.0 278.2 L1051.0 276.0 L1052.0 279.5 L1053.0 282.7 L1054.0 263.7 L1055.0 240.0 L1056.0 270.9 L1057.0 277.6 L1058.0 268.3 L1059.0 283.1 L1060.0 285.5 L1061.0 286.4 L1062.0 284.3 L1063.0 280.7 L1064.0 289.8 L1065.0 286.7 L1066.0 280.4 L1067.0 276.0 L1068.0 247.0 L1069.0 270.8 L1070.0 279.0 L1071.0 283.1 L1072.0 292.4 L1073.0 280.6 L1074.0 273.4 L1075.0 266.8 L1075.9 209.0 L1077.0 270.4 L1078.0 280.6 L1079.0 288.7 L1080.0 281.0 L1081.0 284.3 L1082.0 277.1 L1083.0 285.4 L1084.0 287.9 L1085.0 288.0 L1086.0 286.6 L1087.0 286.3 L1088.0 296.3 L1089.0 286.7 L1090.0 283.8 L1091.0 288.4 L1092.0 287.0 L1093.0 297.2 L1094.0 278.4 L1095.0 258.0 L1096.0 281.0 L1097.0 273.4 L1098.0 271.7 L1099.0 289.4 L1100.0 290.9 L1101.0 285.2 L1102.0 271.3 L1103.0 289.4 L1104.0 287.0 L1105.0 272.3 L1106.0 285.4 L1107.0 272.8 L1108.0 263.5 L1109.4 210.0 L1110.0 278.1 L1111.0 287.8 L1112.0 277.3 L1113.0 290.0 L1114.0 275.5 L1115.5 174.4 L1116.0 269.9 L1117.0 288.5 L1118.0 282.7 L1119.0 288.4 L1120.0 289.9 L1121.0 289.7 L1122.0 289.9 L1123.0 290.7 L1124.0 278.7 L1125.0 255.0 L1126.0 276.0 L1127.0 295.3 L1128.0 280.9 L1129.0 287.8 L1130.0 281.6 L1131.0 285.7 L1132.0 296.1 L1133.0 286.8 L1134.0 277.1 L1135.0 250.0 L1136.0 275.1 L1137.0 289.2 L1138.0 287.8 L1139.0 278.7 L1140.0 277.8 L1141.0 285.6 L1142.0 288.1 L1143.0 290.1 L1144.0 273.3 L1145.0 281.2 L1146.0 285.5 L1147.0 283.4 L1148.0 278.8 L1148.6 189.0 L1150.0 280.0 L1151.0 287.9 L1152.0 289.6 L1153.0 290.1 L1154.0 282.7 L1155.0 292.0 L1156.0 271.5 L1157.0 238.0 L1158.0 277.6 L1159.0 281.1 L1160.0 295.3 L1161.0 287.2 L1162.0 289.7 L1163.0 287.6 L1164.0 278.8 L1165.0 289.6 L1166.0 262.3 L1167.1 203.0 L1168.0 270.8 L1169.0 288.3 L1170.0 289.3 L1171.0 285.8 L1172.0 288.3 L1173.0 279.6 L1174.0 276.0 L1175.0 215.0 L1176.0 273.8 L1177.0 271.6 L1178.0 284.4 L1179.0 291.9 L1180.0 269.7 L1180.9 126.0 L1182.0 231.9 L1183.0 281.3 L1184.0 287.7 L1185.0 282.7 L1186.0 246.2 L1186.9 126.0 L1188.0 256.4 L1189.0 282.1 L1190.0 262.3 L1191.0 187.0 L1192.0 263.4 L1193.0 283.3 L1194.0 276.3 L1195.0 263.9 L1196.0 272.2 L1197.0 205.0 L1198.0 253.6 L1199.0 279.5 L1200.0 279.2 L1201.0 259.2 L1202.0 267.2 L1203.0 275.0 L1204.0 240.6 L1205.0 126.0 L1206.0 223.2 L1207.0 277.9 L1208.0 276.8 L1209.0 258.1 L1210.0 261.6 L1211.0 267.2 L1212.0 259.9 L1213.0 215.0 L1214.0 256.1 L1215.0 260.1 L1216.0 272.2 L1217.0 261.3 L1218.0 270.8 L1219.0 271.6 L1220.0 254.6 L1221.0 230.0 L1222.0 262.6 L1223.0 269.6 L1224.0 267.9 L1225.0 267.2 L1226.0 267.6 L1227.0 257.1 L1228.0 237.4 L1229.3 191.0 L1230.0 237.7 L1231.0 258.2 L1232.0 260.4 L1233.0 260.1 L1233.5 324.5 L297 324.5Z" fill="url(#sg)"/>
<path d="M392.5 131V324.5 M517.5 131V324.5 M642.5 131V324.5 M766.5 131V324.5 M891.5 131V324.5 M1016.5 131V324.5 M1141.5 131V324.5 M297 179.5H1233 M297 227.5H1233 M297 276.5H1233" stroke="#9a9a9a" stroke-opacity="0.55" stroke-width="1" fill="none"/>
<rect x="1020" y="131" width="73" height="193.5" fill="#fff" opacity="0.215"/>
<path d="M297.0 254.8 L298.0 242.0 L299.0 198.0 L300.0 238.2 L301.0 259.8 L302.0 245.6 L303.0 253.6 L304.0 238.4 L305.0 245.0 L306.0 235.0 L307.0 245.6 L308.0 251.2 L309.0 251.8 L310.0 247.0 L311.0 250.2 L312.0 250.6 L313.0 228.5 L314.4 190.3 L315.0 238.2 L316.0 243.9 L317.0 245.5 L318.0 238.4 L319.0 240.4 L320.0 246.2 L321.0 248.2 L322.0 249.0 L323.0 241.4 L324.0 238.0 L325.0 243.0 L326.0 244.9 L327.0 229.0 L328.0 250.1 L329.0 230.1 L330.0 232.0 L331.0 241.9 L332.0 249.4 L333.0 250.2 L334.0 249.9 L335.0 248.1 L336.0 250.5 L337.0 243.8 L338.0 236.0 L339.0 242.1 L340.0 249.0 L341.0 234.2 L342.0 250.6 L343.0 250.3 L344.0 243.4 L345.0 228.0 L346.0 241.1 L347.0 235.5 L348.0 248.4 L349.0 253.7 L350.0 244.3 L351.0 244.0 L352.0 235.1 L353.0 126.0 L354.0 239.2 L355.0 254.1 L356.0 254.1 L357.0 260.3 L358.0 250.9 L359.0 255.2 L360.0 254.9 L361.0 236.9 L362.0 257.5 L363.0 256.8 L364.0 250.0 L365.0 248.9 L366.0 260.1 L367.0 261.4 L368.0 241.0 L368.8 227.0 L370.0 251.8 L371.0 255.8 L372.0 256.2 L373.0 263.7 L374.0 242.4 L375.0 256.8 L376.0 258.9 L377.0 262.7 L378.0 270.6 L379.0 265.8 L380.0 250.6 L381.0 237.5 L382.0 261.1 L383.0 240.0 L384.0 259.5 L385.0 257.2 L386.0 266.6 L387.0 267.7 L388.0 257.8 L389.0 263.8 L390.0 270.7 L391.0 270.0 L392.0 253.0 L393.0 256.9 L394.0 272.3 L395.0 262.3 L396.0 238.0 L397.0 252.2 L398.0 272.4 L399.0 282.2 L400.0 269.7 L401.0 260.9 L402.0 264.9 L403.0 275.2 L404.0 275.0 L405.0 272.4 L406.0 274.6 L407.0 264.7 L408.3 221.0 L409.0 265.8 L410.0 265.3 L411.0 275.2 L412.0 279.6 L413.0 285.8 L414.0 279.4 L415.0 273.7 L416.0 279.0 L417.0 277.1 L418.0 281.2 L419.0 280.6 L420.0 274.4 L421.0 278.4 L422.0 269.8 L423.0 278.3 L424.0 279.9 L425.0 280.8 L426.0 255.0 L427.2 209.0 L428.0 260.0 L429.0 284.5 L430.0 285.9 L431.0 285.5 L432.0 277.8 L433.0 285.6 L434.0 280.9 L435.0 267.1 L436.0 246.0 L437.0 269.7 L438.0 287.0 L439.0 284.3 L440.0 287.4 L441.0 260.9 L442.5 141.6 L443.0 247.4 L444.0 275.0 L445.0 269.8 L446.0 294.4 L447.0 287.8 L448.0 286.6 L449.0 280.4 L450.0 289.0 L451.0 285.3 L452.0 295.7 L453.0 294.7 L454.0 284.7 L455.0 289.9 L456.0 290.1 L457.0 287.2 L458.0 286.2 L459.0 289.0 L460.0 286.7 L461.0 290.3 L462.0 290.7 L463.0 288.8 L464.0 283.0 L465.0 247.4 L465.9 126.0 L467.0 236.2 L468.0 286.1 L469.0 279.8 L470.0 280.9 L471.0 286.5 L472.0 287.4 L473.0 274.2 L474.0 280.1 L475.0 284.3 L476.0 277.3 L477.0 262.0 L478.0 279.2 L479.0 289.1 L480.0 278.2 L481.0 287.6 L482.0 287.4 L483.0 288.3 L484.0 271.7 L485.0 284.7 L486.0 270.4 L487.0 290.5 L488.0 284.9 L489.0 286.9 L490.0 287.9 L491.0 287.1 L492.0 291.0 L493.0 285.7 L494.0 282.8 L495.0 280.8 L496.0 274.8 L497.0 276.5 L498.0 278.8 L499.0 285.4 L500.0 273.2 L501.0 277.9 L502.0 284.2 L503.0 281.4 L504.0 251.5 L505.4 176.6 L506.0 251.6 L507.0 287.3 L508.0 283.7 L509.0 276.4 L510.0 281.0 L511.0 280.4 L512.0 286.8 L513.0 279.4 L514.0 283.0 L515.0 287.0 L516.0 289.5 L517.0 280.5 L518.0 269.6 L519.0 285.4 L520.0 281.9 L521.0 283.2 L522.0 288.1 L523.0 286.9 L524.0 286.4 L525.0 291.9 L526.0 282.1 L527.0 263.0 L527.9 213.0 L529.0 268.7 L530.0 275.6 L531.0 260.7 L532.0 284.4 L533.0 259.8 L534.0 205.0 L535.0 261.5 L536.0 282.7 L537.0 276.0 L538.0 277.9 L539.0 275.3 L540.0 250.3 L541.2 186.0 L542.0 272.6 L543.0 284.6 L544.0 283.9 L545.0 282.2 L546.0 275.3 L547.0 255.3 L548.0 203.0 L549.0 274.3 L550.0 251.7 L551.0 280.8 L552.0 283.7 L553.0 272.6 L554.0 267.0 L555.0 279.9 L556.0 280.1 L557.0 263.6 L558.0 271.2 L559.0 255.0 L560.0 250.0 L561.0 267.9 L562.0 273.0 L563.0 278.0 L564.0 277.2 L565.0 275.2 L566.0 261.1 L567.0 270.9 L568.0 272.1 L569.0 275.3 L570.0 274.8 L571.0 272.0 L572.0 252.0 L573.0 247.0 L574.0 261.6 L575.0 274.3 L576.0 272.9 L577.0 262.3 L578.0 271.1 L579.0 269.7 L580.0 275.0 L581.0 254.4 L582.3 233.0 L583.0 260.8 L584.0 270.4 L585.0 268.9 L586.0 254.2 L587.0 261.5 L588.0 263.4 L589.0 266.2 L590.0 269.2 L591.0 254.3 L592.0 249.1 L593.0 229.4 L594.4 148.4 L595.0 225.7 L596.0 260.5 L597.0 262.4 L598.0 265.0 L599.0 263.3 L600.0 258.5 L601.0 263.0 L602.0 257.7 L603.0 267.2 L604.0 257.4 L605.0 260.4 L606.0 261.2 L607.0 244.9 L608.0 248.4 L609.0 248.2 L610.0 230.0 L611.0 249.0 L612.0 252.1 L613.0 256.1 L614.0 243.0 L615.0 256.6 L616.0 253.3 L617.0 254.6 L618.0 226.4 L619.0 126.0 L620.0 225.4 L621.0 252.4 L622.0 240.4 L623.0 251.8 L624.0 249.9 L625.0 236.4 L626.0 249.9 L627.0 232.5 L628.0 226.0 L629.0 239.8 L630.0 229.7 L631.0 250.0 L632.0 237.0 L633.0 251.8 L634.0 249.3 L635.0 242.8 L636.0 228.0 L637.0 241.8 L638.0 233.2 L639.0 249.0 L640.0 241.8 L641.0 250.9 L642.0 248.5 L643.0 249.9 L644.0 243.2 L645.0 241.6 L646.0 222.0 L647.0 237.9 L648.0 244.5 L649.0 250.0 L650.0 235.0 L651.0 251.0 L652.0 230.9 L652.8 191.0 L654.0 230.1 L655.0 241.1 L656.0 234.5 L657.0 223.5 L658.0 126.0 L659.0 225.8 L660.0 245.5 L661.0 245.1 L662.0 249.7 L663.0 252.9 L664.0 242.7 L664.9 185.0 L666.0 241.0 L667.0 239.6 L668.0 232.8 L669.0 245.1 L669.7 183.5 L671.0 236.9 L672.0 253.3 L673.0 251.4 L674.0 253.4 L675.0 248.0 L676.0 228.0 L677.0 252.6 L678.0 259.4 L679.0 260.5 L680.0 257.1 L681.0 248.4 L682.0 261.2 L683.0 250.2 L684.0 260.0 L685.0 253.9 L686.0 264.3 L687.0 264.3 L688.0 245.6 L689.0 251.3 L690.0 238.0 L691.0 257.6 L692.0 251.4 L693.0 263.0 L694.0 267.1 L695.0 268.1 L696.0 267.8 L697.0 264.1 L698.0 270.4 L699.0 264.7 L700.0 269.4 L701.0 248.2 L701.6 207.6 L703.0 249.0 L704.0 270.7 L705.0 267.2 L706.0 272.3 L707.0 257.7 L708.0 270.3 L709.0 272.3 L710.0 244.4 L711.0 274.9 L712.0 282.7 L713.0 273.9 L714.0 274.4 L715.0 265.0 L716.0 252.0 L717.0 270.2 L718.0 278.4 L719.0 276.7 L720.0 278.8 L721.0 276.0 L722.0 279.8 L723.0 263.9 L724.0 264.7 L725.0 285.4 L726.0 279.0 L727.0 276.6 L728.0 281.2 L729.0 281.0 L730.0 272.4 L731.0 281.8 L732.0 273.2 L733.0 255.0 L734.0 270.3 L735.0 276.7 L736.0 283.4 L737.0 283.7 L738.0 280.2 L739.0 282.9 L740.0 278.6 L741.0 274.4 L742.0 279.8 L743.0 270.5 L744.0 263.2 L745.0 264.6 L746.0 261.0 L747.0 260.2 L748.0 257.0 L749.0 250.3 L750.0 238.8 L751.0 221.9 L752.0 220.7 L753.0 206.0 L754.0 187.0 L755.0 196.7 L755.9 149.6 L757.0 186.1 L758.0 204.8 L759.0 197.6 L760.0 195.0 L761.0 161.0 L762.0 199.1 L763.0 212.4 L764.0 216.5 L765.0 215.5 L766.0 220.8 L767.0 203.7 L768.0 178.0 L769.0 207.1 L770.0 221.5 L771.0 224.4 L772.0 215.2 L773.0 190.0 L774.0 201.2 L775.0 226.0 L776.0 215.5 L777.0 210.7 L778.4 162.0 L779.0 211.1 L780.0 228.4 L781.0 206.4 L782.0 222.3 L783.0 212.1 L784.0 185.0 L785.0 213.9 L786.0 224.1 L787.0 220.2 L788.0 220.3 L789.0 210.2 L790.0 182.0 L791.0 205.8 L792.0 214.1 L793.0 199.3 L794.0 214.3 L795.0 192.9 L796.0 196.3 L797.0 184.9 L797.7 168.3 L799.0 185.4 L800.0 187.8 L801.0 204.4 L802.0 196.2 L803.0 175.0 L804.0 202.9 L805.0 219.5 L806.0 207.4 L807.0 226.8 L808.0 231.8 L809.0 234.1 L810.0 239.1 L810.6 171.0 L812.0 244.5 L813.0 270.2 L814.0 264.7 L815.0 266.8 L816.0 274.8 L817.0 280.8 L818.0 272.6 L819.0 272.0 L820.0 282.6 L821.0 282.6 L822.0 282.0 L823.0 272.6 L824.0 278.6 L825.0 285.5 L826.0 271.4 L827.0 285.4 L828.0 285.7 L829.0 275.1 L830.0 282.0 L831.0 267.5 L832.0 279.0 L833.0 278.7 L834.0 280.0 L835.0 262.0 L836.0 279.4 L837.0 292.4 L838.0 276.4 L839.0 292.6 L840.0 285.0 L841.0 285.2 L842.0 291.2 L843.0 288.9 L844.0 281.8 L845.0 290.6 L846.0 270.2 L847.0 289.3 L848.0 290.2 L849.0 278.8 L850.0 260.0 L851.0 276.3 L852.0 281.8 L853.0 287.3 L854.0 289.1 L855.0 287.2 L856.0 286.3 L857.0 270.3 L858.0 277.9 L859.0 288.0 L860.0 284.8 L861.0 259.1 L862.3 215.0 L863.0 267.7 L864.0 288.1 L865.0 271.3 L866.0 280.9 L867.0 275.2 L868.0 279.6 L869.0 271.0 L870.0 245.0 L871.0 268.3 L872.0 277.1 L873.0 281.4 L874.0 273.0 L875.0 273.5 L876.0 275.5 L877.0 272.9 L878.0 277.3 L879.0 275.5 L880.0 273.1 L881.0 255.5 L882.0 227.0 L883.0 263.6 L884.0 270.2 L885.0 273.5 L886.0 265.3 L887.0 267.7 L888.0 271.8 L889.0 258.9 L890.0 222.0 L891.0 254.6 L892.0 272.0 L893.0 263.5 L894.0 272.5 L895.0 271.0 L896.0 272.0 L897.0 258.3 L898.0 264.9 L899.0 252.0 L900.3 126.0 L901.0 245.4 L902.0 270.8 L903.0 272.9 L904.0 247.8 L905.0 215.0 L906.0 249.7 L907.0 265.1 L908.0 262.5 L909.0 266.6 L910.0 261.4 L911.0 256.6 L912.0 236.0 L913.0 257.6 L914.0 258.2 L915.0 233.0 L916.4 181.0 L917.0 236.0 L918.0 254.4 L919.0 255.7 L920.0 252.2 L921.0 242.4 L922.0 249.4 L923.0 211.9 L924.5 126.0 L925.0 204.2 L926.0 235.6 L927.0 250.9 L928.0 247.6 L929.0 248.4 L930.0 243.0 L931.0 239.2 L932.0 222.0 L933.0 243.4 L934.0 231.4 L935.0 254.4 L936.0 256.9 L937.0 252.6 L938.0 253.6 L939.0 248.2 L940.0 228.0 L941.0 248.0 L942.0 254.7 L943.0 256.4 L944.0 247.7 L945.0 253.1 L946.0 245.3 L947.0 250.3 L948.0 246.3 L949.0 244.6 L950.0 226.0 L951.0 244.1 L952.0 252.7 L953.0 252.5 L954.0 259.0 L955.0 251.7 L956.0 251.2 L957.0 249.8 L958.0 246.7 L959.0 237.8 L960.0 251.7 L961.0 238.7 L962.0 232.7 L963.3 126.0 L964.0 232.7 L965.0 249.5 L966.0 250.2 L967.0 242.7 L968.0 249.9 L969.0 242.1 L970.0 238.4 L971.0 242.1 L972.0 238.1 L973.0 224.0 L974.0 239.5 L975.0 242.7 L976.0 238.2 L977.0 248.2 L978.0 249.0 L979.0 249.4 L980.0 248.7 L981.0 245.7 L982.0 245.5 L983.0 246.7 L984.0 241.3 L985.0 222.0 L986.0 237.9 L987.0 253.2 L988.0 238.2 L989.0 232.6 L990.0 251.7 L991.0 255.9 L992.0 251.4 L993.0 246.6 L994.0 254.7 L995.0 250.9 L996.0 256.6 L997.0 256.0 L998.0 259.3 L999.0 258.9 L1000.0 260.4 L1001.0 242.3 L1002.0 254.3 L1003.0 261.2 L1004.0 252.5 L1005.0 236.0 L1006.0 252.6 L1007.0 264.7 L1008.0 265.3 L1009.0 251.8 L1010.0 260.3 L1011.0 253.3 L1012.0 240.0 L1013.0 255.2 L1014.0 261.5 L1015.0 262.1 L1016.0 260.6 L1017.0 274.5 L1018.0 255.9 L1019.0 267.3 L1020.0 248.2 L1021.4 150.6 L1022.0 235.8 L1023.0 268.7 L1024.0 262.8 L1025.0 272.6 L1026.0 264.2 L1027.0 260.0 L1028.0 225.0 L1029.0 254.1 L1030.0 271.8 L1031.0 275.2 L1032.0 275.0 L1033.0 282.9 L1034.0 269.7 L1035.0 266.6 L1036.0 238.0 L1036.7 159.0 L1038.0 247.5 L1039.0 272.9 L1040.0 278.8 L1041.0 261.5 L1042.0 222.0 L1043.0 263.2 L1044.0 287.7 L1045.0 276.8 L1046.0 275.5 L1047.0 267.9 L1047.6 231.0 L1049.0 267.8 L1050.0 278.2 L1051.0 276.0 L1052.0 279.5 L1053.0 282.7 L1054.0 263.7 L1055.0 240.0 L1056.0 270.9 L1057.0 277.6 L1058.0 268.3 L1059.0 283.1 L1060.0 285.5 L1061.0 286.4 L1062.0 284.3 L1063.0 280.7 L1064.0 289.8 L1065.0 286.7 L1066.0 280.4 L1067.0 276.0 L1068.0 247.0 L1069.0 270.8 L1070.0 279.0 L1071.0 283.1 L1072.0 292.4 L1073.0 280.6 L1074.0 273.4 L1075.0 266.8 L1075.9 209.0 L1077.0 270.4 L1078.0 280.6 L1079.0 288.7 L1080.0 281.0 L1081.0 284.3 L1082.0 277.1 L1083.0 285.4 L1084.0 287.9 L1085.0 288.0 L1086.0 286.6 L1087.0 286.3 L1088.0 296.3 L1089.0 286.7 L1090.0 283.8 L1091.0 288.4 L1092.0 287.0 L1093.0 297.2 L1094.0 278.4 L1095.0 258.0 L1096.0 281.0 L1097.0 273.4 L1098.0 271.7 L1099.0 289.4 L1100.0 290.9 L1101.0 285.2 L1102.0 271.3 L1103.0 289.4 L1104.0 287.0 L1105.0 272.3 L1106.0 285.4 L1107.0 272.8 L1108.0 263.5 L1109.4 210.0 L1110.0 278.1 L1111.0 287.8 L1112.0 277.3 L1113.0 290.0 L1114.0 275.5 L1115.5 174.4 L1116.0 269.9 L1117.0 288.5 L1118.0 282.7 L1119.0 288.4 L1120.0 289.9 L1121.0 289.7 L1122.0 289.9 L1123.0 290.7 L1124.0 278.7 L1125.0 255.0 L1126.0 276.0 L1127.0 295.3 L1128.0 280.9 L1129.0 287.8 L1130.0 281.6 L1131.0 285.7 L1132.0 296.1 L1133.0 286.8 L1134.0 277.1 L1135.0 250.0 L1136.0 275.1 L1137.0 289.2 L1138.0 287.8 L1139.0 278.7 L1140.0 277.8 L1141.0 285.6 L1142.0 288.1 L1143.0 290.1 L1144.0 273.3 L1145.0 281.2 L1146.0 285.5 L1147.0 283.4 L1148.0 278.8 L1148.6 189.0 L1150.0 280.0 L1151.0 287.9 L1152.0 289.6 L1153.0 290.1 L1154.0 282.7 L1155.0 292.0 L1156.0 271.5 L1157.0 238.0 L1158.0 277.6 L1159.0 281.1 L1160.0 295.3 L1161.0 287.2 L1162.0 289.7 L1163.0 287.6 L1164.0 278.8 L1165.0 289.6 L1166.0 262.3 L1167.1 203.0 L1168.0 270.8 L1169.0 288.3 L1170.0 289.3 L1171.0 285.8 L1172.0 288.3 L1173.0 279.6 L1174.0 276.0 L1175.0 215.0 L1176.0 273.8 L1177.0 271.6 L1178.0 284.4 L1179.0 291.9 L1180.0 269.7 L1180.9 126.0 L1182.0 231.9 L1183.0 281.3 L1184.0 287.7 L1185.0 282.7 L1186.0 246.2 L1186.9 126.0 L1188.0 256.4 L1189.0 282.1 L1190.0 262.3 L1191.0 187.0 L1192.0 263.4 L1193.0 283.3 L1194.0 276.3 L1195.0 263.9 L1196.0 272.2 L1197.0 205.0 L1198.0 253.6 L1199.0 279.5 L1200.0 279.2 L1201.0 259.2 L1202.0 267.2 L1203.0 275.0 L1204.0 240.6 L1205.0 126.0 L1206.0 223.2 L1207.0 277.9 L1208.0 276.8 L1209.0 258.1 L1210.0 261.6 L1211.0 267.2 L1212.0 259.9 L1213.0 215.0 L1214.0 256.1 L1215.0 260.1 L1216.0 272.2 L1217.0 261.3 L1218.0 270.8 L1219.0 271.6 L1220.0 254.6 L1221.0 230.0 L1222.0 262.6 L1223.0 269.6 L1224.0 267.9 L1225.0 267.2 L1226.0 267.6 L1227.0 257.1 L1228.0 237.4 L1229.3 191.0 L1230.0 237.7 L1231.0 258.2 L1232.0 260.4 L1233.0 260.1" fill="none" stroke="#fff" stroke-width="1.15" stroke-linejoin="bevel"/>
<path d="M1057 131V324.5" stroke="#c81e28" stroke-width="2.2"/>
<circle cx="314.4" cy="190.3" r="4.9" fill="none" stroke="#e6e200" stroke-width="1.05"/>
<circle cx="353.1" cy="131.1" r="4.9" fill="none" stroke="#e6e200" stroke-width="1.05"/>
<circle cx="465.9" cy="131.1" r="4.9" fill="none" stroke="#e6e200" stroke-width="1.05"/>
<circle cx="505.4" cy="176.6" r="4.9" fill="none" stroke="#e6e200" stroke-width="1.05"/>
<circle cx="619" cy="131.1" r="4.9" fill="none" stroke="#e6e200" stroke-width="1.05"/>
<circle cx="658" cy="131.1" r="4.9" fill="none" stroke="#e6e200" stroke-width="1.05"/>
<circle cx="701.6" cy="207.6" r="4.9" fill="none" stroke="#e6e200" stroke-width="1.05"/>
<circle cx="755.9" cy="149.6" r="4.9" fill="none" stroke="#e6e200" stroke-width="1.05"/>
<circle cx="797.7" cy="168.3" r="4.9" fill="none" stroke="#e6e200" stroke-width="1.05"/>
<circle cx="924.5" cy="131.2" r="4.9" fill="none" stroke="#e6e200" stroke-width="1.05"/>
<circle cx="963.3" cy="131.2" r="4.9" fill="none" stroke="#e6e200" stroke-width="1.05"/>
<circle cx="1021.4" cy="150.6" r="4.9" fill="none" stroke="#e6e200" stroke-width="1.05"/>
<circle cx="1115.5" cy="174.4" r="4.9" fill="none" stroke="#e6e200" stroke-width="1.05"/>
</g>
<path d="M297 131V325 M296.5 324.5H1233 M392.5 324.5V330 M517.5 324.5V330 M642.5 324.5V330 M766.5 324.5V330 M891.5 324.5V330 M1016.5 324.5V330 M1141.5 324.5V330" stroke="#c4c4c4" stroke-width="1" fill="none"/>
<rect x="297" y="101" width="936" height="30" fill="#ff0000"/>
<text x="1015.5" y="118.3" fill="#fff" font-family="'Liberation Mono',monospace" font-size="12.3" textLength="82">2m Ham Band</text>
<rect x="346" y="325" width="90.5" height="5" fill="#2090ff"/>
<rect x="476" y="325" width="81.0" height="5" fill="#2090ff"/>
<rect x="726.2" y="325" width="80.4" height="5" fill="#2090ff"/>
<rect x="851" y="325" width="81.0" height="5" fill="#2090ff"/>
<path d="M392.5 325V330 M517.5 325V330 M766.5 325V330 M891.5 325V330" stroke="#9fd0ff" stroke-width="1" fill="none"/>
<text x="294" y="135.2" text-anchor="end" fill="#d6d6d6">-40</text>
<text x="294" y="183.7" text-anchor="end" fill="#d6d6d6">-45</text>
<text x="294" y="231.7" text-anchor="end" fill="#d6d6d6">-50</text>
<text x="294" y="280.7" text-anchor="end" fill="#d6d6d6">-55</text>
<text x="294" y="328.7" text-anchor="end" fill="#d6d6d6">-60</text>
<text x="392.5" y="343" text-anchor="middle" fill="#d6d6d6">147.300M</text>
<text x="517.5" y="343" text-anchor="middle" fill="#d6d6d6">147.325M</text>
<text x="642.5" y="343" text-anchor="middle" fill="#d6d6d6">147.350M</text>
<text x="766.5" y="343" text-anchor="middle" fill="#d6d6d6">147.375M</text>
<text x="891.5" y="343" text-anchor="middle" fill="#d6d6d6">147.400M</text>
<text x="1016.5" y="343" text-anchor="middle" fill="#d6d6d6">147.425M</text>
<text x="1141.5" y="343" text-anchor="middle" fill="#d6d6d6">147.450M</text>
</svg>
<svg class="a" style="left:269px;top:358px" width="964" height="487" viewBox="269 358 964 487">
<defs><clipPath id="wc"><rect x="296" y="358" width="937" height="487"/></clipPath><linearGradient id="hz" x1="0" y1="0" x2="1" y2="0"><stop offset="0" stop-color="#0b1a8c" stop-opacity="0"/><stop offset="0.5" stop-color="#0b1a8c" stop-opacity="0.07"/><stop offset="1" stop-color="#0b1a8c" stop-opacity="0"/></linearGradient></defs>
<rect x="269" y="358" width="964" height="487" fill="#000"/>
<g clip-path="url(#wc)">
<rect x="296" y="358" width="937" height="487" fill="#010022"/>
<rect x="296" y="358" width="134" height="487" fill="url(#hz)"/>
<rect x="590" y="358" width="115" height="487" fill="url(#hz)"/>
<rect x="895" y="358" width="115" height="487" fill="url(#hz)"/>
<rect x="740" y="358" width="75" height="487" fill="url(#hz)"/>
<path d="M297.5 358V845" stroke="#1a24b0" stroke-dasharray="1 19 1 18 1 15 1 11 1 13 2 15 2 11 1 17 2 15" stroke-dashoffset="33" opacity="0.48"/>
<path d="M298.5 358V845" stroke="#10109a" stroke-dasharray="2 18 1 14 1 7 1 3 1 15 1 13 2 5 1 17 2 4" stroke-dashoffset="36" opacity="0.39"/>
<path d="M299.5 358V845" stroke="#1a24b0" stroke-dasharray="1 3 2 7 2 4 1 16 1 14 1 16 1 9 1 11 2 6" stroke-dashoffset="6" opacity="0.56"/>
<path d="M300.5 358V845" stroke="#10109a" stroke-dasharray="2 7 2 22 2 11 1 11 2 3 2 22 2 22 1 7 2 14" stroke-dashoffset="36" opacity="0.55"/>
<path d="M301.5 358V845" stroke="#1a24b0" stroke-dasharray="1 18 1 9 1 5 2 8 2 10 1 21 1 14 2 6 1 20" stroke-dashoffset="39" opacity="0.39"/>
<path d="M311.5 358V845" stroke="#0a0a70" stroke-dasharray="2 8 2 10 1 20 1 13 2 22 1 12 2 15 1 7 2 17" stroke-dashoffset="4" opacity="0.39"/>
<path d="M313.5 358V845" stroke="#0a0a70" stroke-dasharray="1 10 2 5 1 20 2 15 2 14 1 4 1 20 2 21 1 15" stroke-dashoffset="30" opacity="0.43"/>
<path d="M316.5 358V845" stroke="#1a24b0" stroke-dasharray="2 17 2 17 2 18 2 10 2 20 2 11 2 19 2 15 1 14" stroke-dashoffset="38" opacity="0.40"/>
<path d="M317.5 358V845" stroke="#0c1480" stroke-dasharray="2 17 1 17 2 11 2 5 2 4 2 12 1 16 1 15 2 8" stroke-dashoffset="0" opacity="0.54"/>
<path d="M319.5 358V845" stroke="#10109a" stroke-dasharray="2 17 1 21 1 8 1 8 2 18 2 7 1 7 2 7 1 10" stroke-dashoffset="2" opacity="0.55"/>
<path d="M323.5 358V845" stroke="#10109a" stroke-dasharray="2 10 2 16 2 19 2 9 2 8 2 16 1 10 2 14 2 11" stroke-dashoffset="12" opacity="0.45"/>
<path d="M326.5 358V845" stroke="#0a0a70" stroke-dasharray="2 5 1 13 2 10 1 7 2 8 2 17 2 4 1 18 2 21" stroke-dashoffset="32" opacity="0.42"/>
<path d="M328.5 358V845" stroke="#10109a" stroke-dasharray="1 21 2 5 1 15 2 10 2 20 2 21 1 15 1 17 2 15" stroke-dashoffset="7" opacity="0.58"/>
<path d="M330.5 358V845" stroke="#0a0a70" stroke-dasharray="2 13 2 9 2 19 1 5 1 13 2 12 1 18 1 18 1 9" stroke-dashoffset="8" opacity="0.48"/>
<path d="M333.5 358V845" stroke="#08087a" stroke-dasharray="2 16 2 12 2 5 1 13 1 17 2 13 2 14 1 10 2 20" stroke-dashoffset="13" opacity="0.51"/>
<path d="M337.5 358V845" stroke="#08087a" stroke-dasharray="1 3 1 13 1 20 2 22 1 5 1 21 1 20 2 11 1 12" stroke-dashoffset="21" opacity="0.42"/>
<path d="M343.5 358V845" stroke="#1a24b0" stroke-dasharray="2 21 1 18 1 7 1 16 1 10 2 5 2 5 2 8 1 13" stroke-dashoffset="27" opacity="0.40"/>
<path d="M344.5 358V845" stroke="#08087a" stroke-dasharray="2 13 2 13 1 7 2 14 1 20 2 10 1 14 2 7 2 7" stroke-dashoffset="6" opacity="0.47"/>
<path d="M350.5 358V845" stroke="#1a24b0" stroke-dasharray="2 16 1 15 2 5 2 10 2 10 2 15 1 22 2 18 1 3" stroke-dashoffset="35" opacity="0.48"/>
<path d="M353.5 358V845" stroke="#10109a" stroke-dasharray="1 6 1 16 2 6 2 4 1 10 1 10 1 10 2 4 1 11" stroke-dashoffset="23" opacity="0.41"/>
<path d="M355.5 358V845" stroke="#10109a" stroke-dasharray="1 18 1 5 2 20 2 21 2 7 2 9 2 8 1 17 1 21" stroke-dashoffset="8" opacity="0.41"/>
<path d="M361.5 358V845" stroke="#0a0a70" stroke-dasharray="2 9 1 20 2 20 1 8 2 9 1 11 1 4 2 12 1 5" stroke-dashoffset="25" opacity="0.52"/>
<path d="M362.5 358V845" stroke="#10109a" stroke-dasharray="1 11 1 7 1 5 1 20 2 13 2 14 2 15 2 4 2 17" stroke-dashoffset="2" opacity="0.36"/>
<path d="M367.5 358V845" stroke="#1a24b0" stroke-dasharray="2 14 1 12 1 11 1 13 1 8 2 16 2 4 2 14 2 11" stroke-dashoffset="24" opacity="0.56"/>
<path d="M371.5 358V845" stroke="#0c1480" stroke-dasharray="1 20 1 12 2 8 2 21 2 12 2 19 2 5 2 12 1 4" stroke-dashoffset="33" opacity="0.56"/>
<path d="M373.5 358V845" stroke="#1a24b0" stroke-dasharray="1 8 2 11 2 13 2 21 2 8 1 20 2 15 1 8 2 14" stroke-dashoffset="37" opacity="0.42"/>
<path d="M377.5 358V845" stroke="#10109a" stroke-dasharray="2 4 1 8 1 15 1 13 1 5 2 13 2 10 1 7 1 17" stroke-dashoffset="4" opacity="0.36"/>
<path d="M378.5 358V845" stroke="#10109a" stroke-dasharray="1 17 1 6 1 19 2 9 2 19 1 15 2 12 1 13 1 14" stroke-dashoffset="29" opacity="0.50"/>
<path d="M381.5 358V845" stroke="#08087a" stroke-dasharray="1 9 2 16 1 6 1 17 1 5 2 14 2 21 2 11 2 9" stroke-dashoffset="20" opacity="0.34"/>
<path d="M383.5 358V845" stroke="#08087a" stroke-dasharray="1 10 1 10 1 10 1 14 2 13 2 14 1 17 2 8 1 13" stroke-dashoffset="34" opacity="0.52"/>
<path d="M389.5 358V845" stroke="#08087a" stroke-dasharray="1 5 2 20 1 15 1 17 2 8 1 18 2 18 1 9 2 16" stroke-dashoffset="31" opacity="0.41"/>
<path d="M409.5 358V845" stroke="#1a24b0" stroke-dasharray="2 9 1 13 1 20 1 17 1 6 2 20 2 3 1 18 1 7" stroke-dashoffset="22" opacity="0.28"/>
<path d="M454.5 358V845" stroke="#08087a" stroke-dasharray="1 17 2 13 1 14 1 7 2 6 1 10 2 13 2 16 1 17" stroke-dashoffset="34" opacity="0.41"/>
<path d="M456.5 358V845" stroke="#10109a" stroke-dasharray="2 5 2 7 2 13 1 19 1 9 1 9 1 17 1 16 1 10" stroke-dashoffset="29" opacity="0.22"/>
<path d="M486.5 358V845" stroke="#0a0a70" stroke-dasharray="1 15 1 7 1 12 2 5 1 22 1 18 1 19 2 6 1 6" stroke-dashoffset="24" opacity="0.22"/>
<path d="M500.5 358V845" stroke="#0c1480" stroke-dasharray="2 5 1 13 2 19 2 6 2 20 2 10 2 6 2 22 2 17" stroke-dashoffset="12" opacity="0.25"/>
<path d="M505.5 358V845" stroke="#0c1480" stroke-dasharray="1 21 1 12 1 21 1 20 2 14 2 8 2 22 2 14 1 19" stroke-dashoffset="18" opacity="0.35"/>
<path d="M507.5 358V845" stroke="#10109a" stroke-dasharray="1 13 1 4 1 22 2 16 1 16 2 10 2 18 1 7 1 6" stroke-dashoffset="24" opacity="0.34"/>
<path d="M514.5 358V845" stroke="#10109a" stroke-dasharray="1 12 1 10 2 20 2 11 1 20 1 20 2 19 1 5 2 9" stroke-dashoffset="33" opacity="0.39"/>
<path d="M549.5 358V845" stroke="#08087a" stroke-dasharray="1 4 2 5 2 14 1 9 2 3 1 11 1 13 1 16 1 9" stroke-dashoffset="29" opacity="0.40"/>
<path d="M554.5 358V845" stroke="#1a24b0" stroke-dasharray="2 7 2 16 1 9 2 20 1 15 2 14 2 7 2 22 2 9" stroke-dashoffset="20" opacity="0.41"/>
<path d="M563.5 358V845" stroke="#10109a" stroke-dasharray="1 17 2 9 1 18 2 5 2 22 2 6 1 6 2 12 1 20" stroke-dashoffset="4" opacity="0.32"/>
<path d="M564.5 358V845" stroke="#08087a" stroke-dasharray="1 18 1 8 2 8 1 13 1 20 2 4 1 17 1 21 1 6" stroke-dashoffset="35" opacity="0.39"/>
<path d="M566.5 358V845" stroke="#0a0a70" stroke-dasharray="2 13 2 16 2 21 1 18 1 15 1 11 2 18 2 7 1 7" stroke-dashoffset="37" opacity="0.37"/>
<path d="M569.5 358V845" stroke="#0a0a70" stroke-dasharray="2 20 1 6 1 12 1 11 1 18 1 20 2 13 2 8 1 9" stroke-dashoffset="2" opacity="0.30"/>
<path d="M576.5 358V845" stroke="#10109a" stroke-dasharray="1 8 1 16 2 12 1 12 2 16 2 5 2 14 1 17 2 22" stroke-dashoffset="0" opacity="0.46"/>
<path d="M580.5 358V845" stroke="#1a24b0" stroke-dasharray="1 4 1 22 2 17 1 8 2 8 1 21 1 9 2 15 1 11" stroke-dashoffset="3" opacity="0.40"/>
<path d="M589.5 358V845" stroke="#10109a" stroke-dasharray="1 8 2 18 1 11 2 17 1 12 2 6 1 13 1 4 1 21" stroke-dashoffset="39" opacity="0.48"/>
<path d="M594.5 358V845" stroke="#10109a" stroke-dasharray="2 18 1 8 2 5 2 19 1 19 1 8 2 16 1 15 1 7" stroke-dashoffset="32" opacity="0.38"/>
<path d="M596.5 358V845" stroke="#1a24b0" stroke-dasharray="1 16 2 13 1 12 1 20 2 13 1 6 2 10 1 10 2 6" stroke-dashoffset="1" opacity="0.38"/>
<path d="M608.5 358V845" stroke="#0a0a70" stroke-dasharray="2 5 1 12 2 8 2 7 2 7 2 10 2 13 2 20 2 12" stroke-dashoffset="16" opacity="0.49"/>
<path d="M612.5 358V845" stroke="#1a24b0" stroke-dasharray="1 10 2 9 2 20 1 4 1 10 1 18 2 15 1 9 2 4" stroke-dashoffset="13" opacity="0.35"/>
<path d="M617.5 358V845" stroke="#1a24b0" stroke-dasharray="1 20 1 6 2 9 1 22 1 7 1 16 1 3 2 10 1 12" stroke-dashoffset="35" opacity="0.56"/>
<path d="M620.5 358V845" stroke="#0a0a70" stroke-dasharray="1 17 2 16 2 19 1 15 1 14 1 8 2 13 1 8 1 6" stroke-dashoffset="32" opacity="0.38"/>
<path d="M625.5 358V845" stroke="#1a24b0" stroke-dasharray="1 15 1 12 1 11 2 16 1 15 1 16 1 19 1 14 1 22" stroke-dashoffset="8" opacity="0.48"/>
<path d="M629.5 358V845" stroke="#0c1480" stroke-dasharray="1 7 1 14 2 21 1 16 1 15 1 21 2 4 2 5 1 8" stroke-dashoffset="34" opacity="0.52"/>
<path d="M630.5 358V845" stroke="#08087a" stroke-dasharray="2 6 1 11 2 15 1 17 1 6 2 16 1 8 2 11 2 14" stroke-dashoffset="16" opacity="0.59"/>
<path d="M633.5 358V845" stroke="#0a0a70" stroke-dasharray="1 14 1 11 1 5 1 13 2 6 1 17 2 3 1 6 2 22" stroke-dashoffset="26" opacity="0.41"/>
<path d="M636.5 358V845" stroke="#08087a" stroke-dasharray="1 4 2 15 2 8 2 19 2 11 2 17 1 4 1 5 1 10" stroke-dashoffset="35" opacity="0.46"/>
<path d="M638.5 358V845" stroke="#10109a" stroke-dasharray="1 10 2 8 1 21 1 9 2 16 2 18 2 12 2 11 2 15" stroke-dashoffset="0" opacity="0.49"/>
<path d="M640.5 358V845" stroke="#0c1480" stroke-dasharray="2 8 2 15 1 9 1 15 2 8 1 6 1 5 1 7 1 6" stroke-dashoffset="23" opacity="0.47"/>
<path d="M642.5 358V845" stroke="#1a24b0" stroke-dasharray="2 11 1 13 2 7 2 9 2 5 2 11 2 7 1 16 1 8" stroke-dashoffset="24" opacity="0.38"/>
<path d="M646.5 358V845" stroke="#1a24b0" stroke-dasharray="2 4 2 10 1 17 1 21 2 5 2 17 1 12 2 13 1 13" stroke-dashoffset="2" opacity="0.37"/>
<path d="M647.5 358V845" stroke="#0c1480" stroke-dasharray="2 14 2 6 1 22 2 9 2 22 1 19 1 22 1 7 2 15" stroke-dashoffset="9" opacity="0.48"/>
<path d="M651.5 358V845" stroke="#0c1480" stroke-dasharray="1 18 1 13 2 7 1 15 1 14 2 12 1 18 2 18 2 20" stroke-dashoffset="9" opacity="0.38"/>
<path d="M653.5 358V845" stroke="#0c1480" stroke-dasharray="2 7 1 11 2 4 2 12 1 5 2 13 1 21 2 14 2 10" stroke-dashoffset="21" opacity="0.45"/>
<path d="M666.5 358V845" stroke="#0c1480" stroke-dasharray="2 15 1 7 2 16 2 10 1 11 1 15 1 19 1 12 2 21" stroke-dashoffset="22" opacity="0.42"/>
<path d="M669.5 358V845" stroke="#0c1480" stroke-dasharray="1 20 2 4 2 7 1 7 1 7 2 10 1 14 2 8 2 3" stroke-dashoffset="39" opacity="0.49"/>
<path d="M671.5 358V845" stroke="#08087a" stroke-dasharray="2 8 1 9 2 19 2 13 1 20 1 10 1 17 2 10 2 21" stroke-dashoffset="1" opacity="0.43"/>
<path d="M673.5 358V845" stroke="#1a24b0" stroke-dasharray="2 12 2 4 1 3 2 11 1 13 1 4 2 15 2 21 2 14" stroke-dashoffset="31" opacity="0.43"/>
<path d="M678.5 358V845" stroke="#0a0a70" stroke-dasharray="1 15 2 17 1 18 2 18 1 12 1 19 2 20 1 10 2 13" stroke-dashoffset="7" opacity="0.52"/>
<path d="M679.5 358V845" stroke="#0a0a70" stroke-dasharray="1 8 2 13 1 10 1 14 1 22 2 6 1 6 2 18 2 6" stroke-dashoffset="36" opacity="0.45"/>
<path d="M681.5 358V845" stroke="#0a0a70" stroke-dasharray="1 3 1 19 2 17 1 13 1 5 1 21 2 19 1 11 1 8" stroke-dashoffset="7" opacity="0.47"/>
<path d="M684.5 358V845" stroke="#08087a" stroke-dasharray="2 14 2 20 1 9 2 8 1 11 1 10 1 12 1 19 1 13" stroke-dashoffset="35" opacity="0.43"/>
<path d="M686.5 358V845" stroke="#0a0a70" stroke-dasharray="2 4 1 21 2 13 2 10 2 5 2 10 1 21 2 19 1 17" stroke-dashoffset="3" opacity="0.36"/>
<path d="M688.5 358V845" stroke="#0c1480" stroke-dasharray="1 5 1 8 2 11 2 11 1 16 1 22 2 9 1 19 2 15" stroke-dashoffset="3" opacity="0.33"/>
<path d="M691.5 358V845" stroke="#08087a" stroke-dasharray="1 9 2 15 2 7 2 19 1 9 2 20 2 6 1 16 1 17" stroke-dashoffset="27" opacity="0.45"/>
<path d="M692.5 358V845" stroke="#0a0a70" stroke-dasharray="2 21 1 19 2 16 1 16 2 5 2 5 1 6 2 6 1 11" stroke-dashoffset="27" opacity="0.52"/>
<path d="M695.5 358V845" stroke="#1a24b0" stroke-dasharray="1 16 1 18 1 17 1 14 1 10 1 10 2 13 1 14 2 10" stroke-dashoffset="37" opacity="0.46"/>
<path d="M700.5 358V845" stroke="#10109a" stroke-dasharray="2 10 1 4 2 18 1 8 1 20 1 6 1 13 1 5 1 15" stroke-dashoffset="19" opacity="0.45"/>
<path d="M702.5 358V845" stroke="#08087a" stroke-dasharray="1 12 1 11 2 10 1 8 1 22 2 17 1 6 1 6 2 10" stroke-dashoffset="20" opacity="0.44"/>
<path d="M704.5 358V845" stroke="#0c1480" stroke-dasharray="2 19 2 5 1 6 2 16 1 14 1 4 1 18 2 6 1 19" stroke-dashoffset="34" opacity="0.46"/>
<path d="M710.5 358V845" stroke="#0c1480" stroke-dasharray="2 13 1 16 1 7 2 8 2 20 1 13 2 21 2 9 1 21" stroke-dashoffset="7" opacity="0.36"/>
<path d="M714.5 358V845" stroke="#0a0a70" stroke-dasharray="1 11 1 20 2 22 2 13 1 16 1 16 2 21 2 5 1 7" stroke-dashoffset="31" opacity="0.28"/>
<path d="M716.5 358V845" stroke="#0c1480" stroke-dasharray="1 8 1 13 2 6 1 18 2 18 2 14 2 9 1 18 1 20" stroke-dashoffset="6" opacity="0.31"/>
<path d="M717.5 358V845" stroke="#0a0a70" stroke-dasharray="1 6 1 14 2 18 2 5 1 21 1 11 1 10 1 10 2 8" stroke-dashoffset="3" opacity="0.31"/>
<path d="M728.5 358V845" stroke="#0c1480" stroke-dasharray="1 7 2 7 2 15 2 14 2 3 1 4 2 17 1 4 1 5" stroke-dashoffset="32" opacity="0.26"/>
<path d="M735.5 358V845" stroke="#1a24b0" stroke-dasharray="2 11 2 7 2 7 2 14 2 4 2 20 1 4 2 11 1 4" stroke-dashoffset="10" opacity="0.23"/>
<path d="M742.5 358V845" stroke="#0a0a70" stroke-dasharray="1 6 2 20 2 21 1 10 1 8 2 4 1 10 1 9 1 5" stroke-dashoffset="33" opacity="0.42"/>
<path d="M749.5 358V845" stroke="#08087a" stroke-dasharray="1 21 2 5 1 20 2 10 2 12 1 6 1 16 1 14 2 8" stroke-dashoffset="2" opacity="0.47"/>
<path d="M751.5 358V845" stroke="#0a0a70" stroke-dasharray="1 11 2 15 1 3 1 6 2 9 2 14 2 8 2 6 1 14" stroke-dashoffset="39" opacity="0.61"/>
<path d="M754.5 358V845" stroke="#0c1480" stroke-dasharray="1 20 1 21 2 20 1 13 2 8 1 17 1 14 1 21 1 5" stroke-dashoffset="0" opacity="0.55"/>
<path d="M756.5 358V845" stroke="#08087a" stroke-dasharray="2 16 2 11 1 19 2 4 1 15 1 6 1 13 1 8 1 14" stroke-dashoffset="25" opacity="0.43"/>
<path d="M757.5 358V845" stroke="#08087a" stroke-dasharray="1 10 1 4 2 6 1 16 2 21 2 16 1 9 2 5 1 17" stroke-dashoffset="17" opacity="0.63"/>
<path d="M761.5 358V845" stroke="#10109a" stroke-dasharray="1 18 2 16 1 15 2 11 2 19 2 6 1 8 1 8 2 18" stroke-dashoffset="16" opacity="0.52"/>
<path d="M764.5 358V845" stroke="#1a24b0" stroke-dasharray="2 20 2 21 2 12 1 10 1 6 2 7 2 18 2 13 1 8" stroke-dashoffset="11" opacity="0.50"/>
<path d="M765.5 358V845" stroke="#0a0a70" stroke-dasharray="1 21 2 9 2 15 2 18 1 8 2 12 1 19 2 12 2 8" stroke-dashoffset="12" opacity="0.57"/>
<path d="M767.5 358V845" stroke="#0a0a70" stroke-dasharray="1 21 1 19 2 13 1 20 2 20 1 11 1 11 2 18 2 13" stroke-dashoffset="16" opacity="0.48"/>
<path d="M771.5 358V845" stroke="#0a0a70" stroke-dasharray="2 6 2 18 2 21 1 18 1 4 1 22 2 7 1 20 2 3" stroke-dashoffset="29" opacity="0.59"/>
<path d="M777.5 358V845" stroke="#10109a" stroke-dasharray="1 15 2 15 1 16 1 4 1 3 1 10 1 5 2 19 1 14" stroke-dashoffset="20" opacity="0.60"/>
<path d="M778.5 358V845" stroke="#08087a" stroke-dasharray="2 17 2 7 1 5 1 7 2 7 1 7 1 20 2 5 2 15" stroke-dashoffset="35" opacity="0.41"/>
<path d="M781.5 358V845" stroke="#08087a" stroke-dasharray="2 18 1 16 2 9 2 21 2 16 1 15 1 18 2 22 1 17" stroke-dashoffset="1" opacity="0.57"/>
<path d="M784.5 358V845" stroke="#0a0a70" stroke-dasharray="2 7 1 22 1 20 1 14 2 19 1 14 2 17 2 14 1 16" stroke-dashoffset="35" opacity="0.51"/>
<path d="M787.5 358V845" stroke="#10109a" stroke-dasharray="2 14 2 13 1 17 1 21 1 21 2 12 1 20 2 16 1 4" stroke-dashoffset="29" opacity="0.65"/>
<path d="M790.5 358V845" stroke="#0c1480" stroke-dasharray="1 4 1 13 1 10 1 16 1 14 2 13 1 11 2 15 2 15" stroke-dashoffset="13" opacity="0.64"/>
<path d="M792.5 358V845" stroke="#0a0a70" stroke-dasharray="2 8 1 16 1 19 2 7 2 16 1 20 1 12 1 11 2 14" stroke-dashoffset="38" opacity="0.63"/>
<path d="M794.5 358V845" stroke="#08087a" stroke-dasharray="1 15 2 18 2 6 1 14 2 12 2 10 2 9 2 12 1 12" stroke-dashoffset="3" opacity="0.46"/>
<path d="M796.5 358V845" stroke="#0c1480" stroke-dasharray="2 12 2 10 2 11 2 15 2 4 1 16 1 18 1 3 1 3" stroke-dashoffset="18" opacity="0.41"/>
<path d="M798.5 358V845" stroke="#0c1480" stroke-dasharray="1 6 1 6 1 16 1 13 2 20 2 11 2 8 2 10 1 11" stroke-dashoffset="36" opacity="0.40"/>
<path d="M800.5 358V845" stroke="#1a24b0" stroke-dasharray="1 18 2 8 1 20 2 16 2 17 1 11 2 20 2 20 2 4" stroke-dashoffset="15" opacity="0.47"/>
<path d="M802.5 358V845" stroke="#0c1480" stroke-dasharray="1 8 1 21 2 5 2 18 2 17 1 22 2 14 2 4 2 4" stroke-dashoffset="15" opacity="0.53"/>
<path d="M805.5 358V845" stroke="#08087a" stroke-dasharray="2 22 2 15 1 17 2 14 1 9 1 20 2 22 1 7 2 7" stroke-dashoffset="10" opacity="0.51"/>
<path d="M806.5 358V845" stroke="#10109a" stroke-dasharray="2 15 2 20 2 22 2 20 2 9 1 3 2 19 1 20 2 10" stroke-dashoffset="11" opacity="0.58"/>
<path d="M809.5 358V845" stroke="#10109a" stroke-dasharray="2 8 1 5 1 16 1 21 2 5 2 15 2 21 1 3 1 14" stroke-dashoffset="7" opacity="0.64"/>
<path d="M811.5 358V845" stroke="#08087a" stroke-dasharray="1 9 1 14 2 6 2 12 2 14 1 7 2 4 2 4 1 12" stroke-dashoffset="27" opacity="0.35"/>
<path d="M818.5 358V845" stroke="#0a0a70" stroke-dasharray="2 8 2 6 2 6 1 22 2 14 1 6 1 11 1 13 1 19" stroke-dashoffset="24" opacity="0.27"/>
<path d="M821.5 358V845" stroke="#08087a" stroke-dasharray="1 3 1 22 1 18 2 11 2 19 1 8 2 6 2 20 2 5" stroke-dashoffset="2" opacity="0.34"/>
<path d="M825.5 358V845" stroke="#0a0a70" stroke-dasharray="2 21 1 10 2 18 1 22 2 19 1 15 2 20 2 20 2 19" stroke-dashoffset="17" opacity="0.44"/>
<path d="M835.5 358V845" stroke="#1a24b0" stroke-dasharray="1 12 2 22 1 10 2 7 2 7 2 9 1 3 1 9 1 22" stroke-dashoffset="40" opacity="0.42"/>
<path d="M836.5 358V845" stroke="#10109a" stroke-dasharray="2 6 1 12 2 8 2 8 2 18 2 15 2 15 2 5 2 16" stroke-dashoffset="26" opacity="0.36"/>
<path d="M845.5 358V845" stroke="#0c1480" stroke-dasharray="2 13 2 10 1 15 1 7 1 6 1 13 1 14 2 10 1 16" stroke-dashoffset="23" opacity="0.34"/>
<path d="M857.5 358V845" stroke="#0c1480" stroke-dasharray="1 20 1 8 2 10 1 5 2 17 1 15 1 8 2 16 2 16" stroke-dashoffset="22" opacity="0.30"/>
<path d="M865.5 358V845" stroke="#10109a" stroke-dasharray="1 9 1 20 1 3 2 12 1 6 2 17 1 16 1 11 2 4" stroke-dashoffset="3" opacity="0.26"/>
<path d="M879.5 358V845" stroke="#0a0a70" stroke-dasharray="1 6 1 6 1 11 2 22 2 8 2 13 2 8 1 13 2 14" stroke-dashoffset="16" opacity="0.35"/>
<path d="M881.5 358V845" stroke="#10109a" stroke-dasharray="1 5 1 6 2 12 2 10 1 6 2 15 1 16 2 15 2 15" stroke-dashoffset="27" opacity="0.35"/>
<path d="M884.5 358V845" stroke="#1a24b0" stroke-dasharray="2 5 1 12 2 8 2 6 1 16 1 10 2 21 1 20 2 15" stroke-dashoffset="9" opacity="0.50"/>
<path d="M888.5 358V845" stroke="#0c1480" stroke-dasharray="2 21 2 21 2 9 1 7 2 18 1 3 1 5 2 14 1 12" stroke-dashoffset="31" opacity="0.47"/>
<path d="M890.5 358V845" stroke="#1a24b0" stroke-dasharray="1 21 1 21 2 14 1 18 1 14 1 5 1 6 2 14 2 21" stroke-dashoffset="29" opacity="0.39"/>
<path d="M901.5 358V845" stroke="#0a0a70" stroke-dasharray="2 21 2 5 1 6 2 15 2 5 1 11 1 10 2 7 1 15" stroke-dashoffset="37" opacity="0.31"/>
<path d="M903.5 358V845" stroke="#10109a" stroke-dasharray="1 4 1 12 2 14 2 13 1 21 1 15 2 12 2 11 2 20" stroke-dashoffset="31" opacity="0.40"/>
<path d="M907.5 358V845" stroke="#0a0a70" stroke-dasharray="2 12 1 10 1 15 2 18 1 12 1 10 1 16 2 9 2 6" stroke-dashoffset="2" opacity="0.34"/>
<path d="M917.5 358V845" stroke="#0a0a70" stroke-dasharray="1 6 2 19 1 6 1 3 2 7 2 18 1 7 1 18 2 9" stroke-dashoffset="28" opacity="0.38"/>
<path d="M920.5 358V845" stroke="#0c1480" stroke-dasharray="2 4 1 10 2 5 2 9 2 7 1 20 1 14 1 5 1 18" stroke-dashoffset="2" opacity="0.46"/>
<path d="M921.5 358V845" stroke="#1a24b0" stroke-dasharray="1 4 2 11 1 11 2 11 1 18 1 8 1 21 2 10 1 4" stroke-dashoffset="37" opacity="0.58"/>
<path d="M925.5 358V845" stroke="#0c1480" stroke-dasharray="2 6 1 18 2 17 1 3 2 6 1 11 2 15 1 10 1 10" stroke-dashoffset="9" opacity="0.38"/>
<path d="M927.5 358V845" stroke="#08087a" stroke-dasharray="2 13 2 21 2 19 2 14 2 14 1 3 2 20 1 20 2 5" stroke-dashoffset="40" opacity="0.51"/>
<path d="M932.5 358V845" stroke="#1a24b0" stroke-dasharray="2 18 1 5 2 17 1 21 2 4 1 9 1 20 2 5 1 8" stroke-dashoffset="32" opacity="0.42"/>
<path d="M933.5 358V845" stroke="#08087a" stroke-dasharray="1 11 2 21 2 20 2 7 1 12 2 15 1 22 1 3 1 7" stroke-dashoffset="2" opacity="0.46"/>
<path d="M935.5 358V845" stroke="#0a0a70" stroke-dasharray="2 8 1 21 2 17 1 17 2 13 1 13 2 9 2 6 2 7" stroke-dashoffset="14" opacity="0.39"/>
<path d="M941.5 358V845" stroke="#0a0a70" stroke-dasharray="1 4 2 12 2 22 1 16 2 16 1 15 1 20 2 18 1 7" stroke-dashoffset="28" opacity="0.36"/>
<path d="M945.5 358V845" stroke="#10109a" stroke-dasharray="2 6 2 19 2 6 2 16 2 6 1 6 1 15 1 22 2 13" stroke-dashoffset="3" opacity="0.59"/>
<path d="M952.5 358V845" stroke="#08087a" stroke-dasharray="2 6 2 10 1 15 1 12 1 7 1 14 1 20 2 16 2 20" stroke-dashoffset="3" opacity="0.36"/>
<path d="M955.5 358V845" stroke="#0a0a70" stroke-dasharray="2 17 2 5 2 10 1 15 2 14 1 9 2 11 2 9 2 15" stroke-dashoffset="34" opacity="0.38"/>
<path d="M957.5 358V845" stroke="#0c1480" stroke-dasharray="2 18 2 22 1 9 1 10 1 5 2 13 2 19 1 11 1 10" stroke-dashoffset="20" opacity="0.45"/>
<path d="M959.5 358V845" stroke="#0a0a70" stroke-dasharray="2 3 1 6 1 11 2 22 2 7 2 17 2 10 2 18 1 13" stroke-dashoffset="8" opacity="0.48"/>
<path d="M964.5 358V845" stroke="#1a24b0" stroke-dasharray="2 12 1 8 2 3 1 22 1 6 1 17 2 5 2 19 2 16" stroke-dashoffset="18" opacity="0.60"/>
<path d="M966.5 358V845" stroke="#10109a" stroke-dasharray="1 3 2 17 2 14 1 6 1 15 2 21 1 7 1 6 1 12" stroke-dashoffset="26" opacity="0.47"/>
<path d="M969.5 358V845" stroke="#0c1480" stroke-dasharray="1 7 1 12 1 15 2 8 1 9 2 18 1 9 2 12 1 7" stroke-dashoffset="31" opacity="0.61"/>
<path d="M972.5 358V845" stroke="#0a0a70" stroke-dasharray="1 20 2 19 1 21 1 19 1 10 1 5 1 17 1 5 2 19" stroke-dashoffset="16" opacity="0.45"/>
<path d="M973.5 358V845" stroke="#10109a" stroke-dasharray="2 21 2 7 1 12 1 14 1 16 1 4 1 21 2 20 1 22" stroke-dashoffset="10" opacity="0.47"/>
<path d="M978.5 358V845" stroke="#08087a" stroke-dasharray="2 11 2 3 1 3 1 20 2 14 2 12 1 13 2 6 2 16" stroke-dashoffset="11" opacity="0.40"/>
<path d="M983.5 358V845" stroke="#1a24b0" stroke-dasharray="2 12 2 9 1 19 2 17 2 21 1 15 1 16 2 13 1 14" stroke-dashoffset="4" opacity="0.43"/>
<path d="M985.5 358V845" stroke="#1a24b0" stroke-dasharray="1 7 1 10 2 18 2 5 2 19 2 17 1 13 2 5 1 4" stroke-dashoffset="4" opacity="0.39"/>
<path d="M988.5 358V845" stroke="#0c1480" stroke-dasharray="2 15 2 14 2 3 1 5 2 6 1 6 1 10 2 13 1 7" stroke-dashoffset="26" opacity="0.40"/>
<path d="M989.5 358V845" stroke="#1a24b0" stroke-dasharray="1 3 2 8 2 20 2 8 2 9 2 8 2 16 2 10 2 14" stroke-dashoffset="16" opacity="0.56"/>
<path d="M990.5 358V845" stroke="#0a0a70" stroke-dasharray="2 8 1 7 2 20 1 7 2 3 2 17 1 14 1 7 2 5" stroke-dashoffset="38" opacity="0.38"/>
<path d="M992.5 358V845" stroke="#10109a" stroke-dasharray="2 7 1 10 1 19 2 13 2 14 2 14 2 7 1 11 2 21" stroke-dashoffset="18" opacity="0.51"/>
<path d="M996.5 358V845" stroke="#08087a" stroke-dasharray="1 7 1 7 1 5 2 6 2 14 2 12 2 9 1 16 1 17" stroke-dashoffset="37" opacity="0.57"/>
<path d="M1000.5 358V845" stroke="#1a24b0" stroke-dasharray="1 20 2 10 1 13 2 9 1 11 1 9 2 19 1 18 2 12" stroke-dashoffset="40" opacity="0.41"/>
<path d="M1004.5 358V845" stroke="#0a0a70" stroke-dasharray="1 21 1 6 2 10 1 20 1 17 1 13 2 5 2 3 2 20" stroke-dashoffset="28" opacity="0.48"/>
<path d="M1010.5 358V845" stroke="#0a0a70" stroke-dasharray="2 22 2 3 2 11 1 22 2 9 2 14 2 8 1 12 1 7" stroke-dashoffset="14" opacity="0.37"/>
<path d="M1013.5 358V845" stroke="#1a24b0" stroke-dasharray="2 12 2 18 1 22 2 9 1 17 1 16 1 19 1 20 1 11" stroke-dashoffset="36" opacity="0.52"/>
<path d="M1021.5 358V845" stroke="#08087a" stroke-dasharray="1 19 1 4 1 12 2 3 1 3 1 9 1 21 2 19 2 20" stroke-dashoffset="38" opacity="0.31"/>
<path d="M1031.5 358V845" stroke="#1a24b0" stroke-dasharray="1 14 1 8 1 13 2 7 2 14 2 22 1 22 1 13 1 5" stroke-dashoffset="6" opacity="0.44"/>
<path d="M1032.5 358V845" stroke="#0a0a70" stroke-dasharray="1 8 2 11 1 16 2 15 1 13 2 19 2 8 2 5 1 13" stroke-dashoffset="11" opacity="0.26"/>
<path d="M1034.5 358V845" stroke="#1a24b0" stroke-dasharray="2 17 2 8 1 22 1 11 2 9 1 4 2 19 1 10 2 9" stroke-dashoffset="9" opacity="0.48"/>
<path d="M1040.5 358V845" stroke="#1a24b0" stroke-dasharray="2 13 2 10 2 12 2 17 1 14 1 10 2 20 1 19 2 6" stroke-dashoffset="35" opacity="0.38"/>
<path d="M1050.5 358V845" stroke="#08087a" stroke-dasharray="2 7 2 18 2 13 1 4 1 13 2 12 2 14 2 11 2 13" stroke-dashoffset="12" opacity="0.27"/>
<path d="M1062.5 358V845" stroke="#0a0a70" stroke-dasharray="2 9 1 12 1 15 2 18 2 17 2 12 1 15 1 19 1 14" stroke-dashoffset="33" opacity="0.41"/>
<path d="M1071.5 358V845" stroke="#0a0a70" stroke-dasharray="2 8 1 20 1 9 2 16 2 19 1 13 1 10 1 19 1 16" stroke-dashoffset="9" opacity="0.43"/>
<path d="M1102.5 358V845" stroke="#0a0a70" stroke-dasharray="1 15 1 16 2 6 1 9 2 22 2 16 1 11 1 5 1 9" stroke-dashoffset="23" opacity="0.24"/>
<path d="M1109.5 358V845" stroke="#0c1480" stroke-dasharray="2 10 2 11 2 20 2 19 2 21 1 14 1 10 1 15 1 17" stroke-dashoffset="4" opacity="0.34"/>
<path d="M1112.5 358V845" stroke="#0a0a70" stroke-dasharray="2 6 2 7 2 11 2 12 1 9 2 10 1 13 2 21 1 9" stroke-dashoffset="31" opacity="0.36"/>
<path d="M1117.5 358V845" stroke="#0a0a70" stroke-dasharray="1 16 2 20 2 21 1 13 2 6 1 13 2 9 1 16 1 7" stroke-dashoffset="6" opacity="0.25"/>
<path d="M1137.5 358V845" stroke="#1a24b0" stroke-dasharray="1 8 2 13 1 10 1 4 1 21 2 13 2 13 2 5 1 15" stroke-dashoffset="26" opacity="0.32"/>
<path d="M1156.5 358V845" stroke="#0c1480" stroke-dasharray="2 16 1 5 2 12 2 4 2 18 1 4 2 9 2 12 2 19" stroke-dashoffset="24" opacity="0.29"/>
<path d="M1159.5 358V845" stroke="#1a24b0" stroke-dasharray="1 12 1 20 1 20 1 7 2 16 2 6 1 13 2 16 2 21" stroke-dashoffset="18" opacity="0.31"/>
<path d="M1161.5 358V845" stroke="#10109a" stroke-dasharray="1 16 1 17 2 17 2 15 1 5 2 16 1 18 2 10 2 10" stroke-dashoffset="30" opacity="0.37"/>
<path d="M1182.5 358V845" stroke="#0c1480" stroke-dasharray="2 21 1 20 2 10 1 14 2 21 2 17 2 6 2 11 1 8" stroke-dashoffset="23" opacity="0.43"/>
<path d="M1192.5 358V845" stroke="#10109a" stroke-dasharray="2 10 1 7 2 15 2 22 1 11 1 5 2 14 1 12 2 22" stroke-dashoffset="12" opacity="0.33"/>
<path d="M1195.5 358V845" stroke="#10109a" stroke-dasharray="2 13 1 15 2 18 1 9 1 10 1 21 2 16 2 17 2 19" stroke-dashoffset="31" opacity="0.40"/>
<path d="M1198.5 358V845" stroke="#0c1480" stroke-dasharray="1 3 2 10 2 12 2 5 1 15 1 20 1 16 1 4 1 18" stroke-dashoffset="40" opacity="0.31"/>
<path d="M1200.5 358V845" stroke="#08087a" stroke-dasharray="1 7 1 19 2 14 1 11 2 15 1 5 1 12 1 7 2 7" stroke-dashoffset="9" opacity="0.42"/>
<path d="M1204.5 358V845" stroke="#0a0a70" stroke-dasharray="1 15 1 14 1 10 1 17 1 9 1 16 2 12 2 10 2 12" stroke-dashoffset="38" opacity="0.35"/>
<path d="M1207.5 358V845" stroke="#0a0a70" stroke-dasharray="1 20 1 11 1 12 2 7 1 13 2 6 1 14 1 4 2 20" stroke-dashoffset="13" opacity="0.34"/>
<path d="M1216.5 358V845" stroke="#08087a" stroke-dasharray="1 15 1 8 1 13 2 11 1 6 2 19 1 3 2 9 2 12" stroke-dashoffset="12" opacity="0.28"/>
<path d="M1222.5 358V845" stroke="#0a0a70" stroke-dasharray="1 17 1 6 1 5 2 8 1 18 2 20 2 16 2 16 2 14" stroke-dashoffset="35" opacity="0.46"/>
<path d="M1227.5 358V845" stroke="#08087a" stroke-dasharray="1 17 2 3 1 15 1 16 1 5 2 21 1 15 2 15 2 13" stroke-dashoffset="27" opacity="0.31"/>
<path d="M351.5 358V845" stroke="#1428c0" stroke-dasharray="1 34 3 14 2 36 2 26 3 37 1 39 2 27 3 16 2 37" stroke-dashoffset="50" opacity="0.37"/>
<path d="M326.5 358V845" stroke="#0e1a9a" stroke-dasharray="2 15 2 32 2 38 2 29 2 19 1 19 2 13 3 7 2 9" stroke-dashoffset="42" opacity="0.62"/>
<path d="M298.5 358V845" stroke="#0e1a9a" stroke-dasharray="3 31 2 23 3 8 1 28 3 11 1 22 3 25 2 8 1 26" stroke-dashoffset="46" opacity="0.58"/>
<path d="M345.5 358V845" stroke="#1428c0" stroke-dasharray="2 20 2 12 1 28 3 28 3 10 2 18 3 26 2 37 3 11" stroke-dashoffset="28" opacity="0.38"/>
<path d="M352.5 358V845" stroke="#1428c0" stroke-dasharray="1 35 2 20 2 10 1 22 1 30 3 40 2 9 2 8 3 24" stroke-dashoffset="28" opacity="0.56"/>
<path d="M348.5 358V845" stroke="#1c34d8" stroke-dasharray="3 23 1 33 1 7 2 22 2 27 1 13 3 34 2 15 2 13" stroke-dashoffset="6" opacity="0.42"/>
<path d="M316.5 358V845" stroke="#1428c0" stroke-dasharray="2 19 1 35 2 32 1 37 1 7 1 25 2 12 3 9 1 38" stroke-dashoffset="11" opacity="0.47"/>
<path d="M297.5 358V845" stroke="#1c34d8" stroke-dasharray="2 6 2 20 1 27 2 16 2 32 1 10 2 32 1 39 2 32" stroke-dashoffset="33" opacity="0.32"/>
<path d="M327.5 358V845" stroke="#1c34d8" stroke-dasharray="2 12 2 24 1 7 1 36 2 39 2 16 2 40 2 17 2 23" stroke-dashoffset="5" opacity="0.51"/>
<path d="M348.5 358V845" stroke="#1428c0" stroke-dasharray="2 35 1 18 2 8 2 6 3 34 2 8 2 32 2 9 2 26" stroke-dashoffset="8" opacity="0.50"/>
<path d="M342.5 358V845" stroke="#1c34d8" stroke-dasharray="2 20 3 15 3 9 3 25 1 34 3 10 3 39 2 33 2 25" stroke-dashoffset="24" opacity="0.58"/>
<path d="M317.5 358V845" stroke="#1c34d8" stroke-dasharray="3 38 1 25 2 13 1 36 3 30 2 21 3 9 2 30 2 38" stroke-dashoffset="40" opacity="0.34"/>
<path d="M324.5 358V845" stroke="#1428c0" stroke-dasharray="2 16 2 32 3 37 3 39 2 31 1 20 2 10 3 19 1 9" stroke-dashoffset="34" opacity="0.38"/>
<path d="M317.5 358V845" stroke="#1428c0" stroke-dasharray="2 21 1 8 2 27 2 23 2 37 1 14 3 17 2 21 2 32" stroke-dashoffset="6" opacity="0.41"/>
<path d="M300.5 358V845" stroke="#1c34d8" stroke-dasharray="2 14 2 24 1 12 2 31 2 19 3 37 3 25 3 39 1 37" stroke-dashoffset="44" opacity="0.65"/>
<path d="M339.5 358V845" stroke="#0e1a9a" stroke-dasharray="2 31 2 27 1 19 2 18 3 36 3 8 2 38 2 15 2 9" stroke-dashoffset="33" opacity="0.34"/>
<path d="M317.5 358V845" stroke="#1c34d8" stroke-dasharray="2 29 3 11 3 14 2 39 1 30 1 24 3 25 2 34 1 24" stroke-dashoffset="23" opacity="0.46"/>
<path d="M312.5 358V845" stroke="#1c34d8" stroke-dasharray="3 35 2 23 3 23 3 26 1 20 3 7 3 33 3 22 1 31" stroke-dashoffset="4" opacity="0.39"/>
<path d="M301.5 358V845" stroke="#1428c0" stroke-dasharray="1 14 2 32 2 6 1 31 2 19 3 24 3 9 2 17 1 31" stroke-dashoffset="38" opacity="0.61"/>
<path d="M336.5 358V845" stroke="#1c34d8" stroke-dasharray="3 39 2 7 1 28 2 16 2 20 3 32 3 36 2 9 1 9" stroke-dashoffset="7" opacity="0.43"/>
<path d="M314.5 358V845" stroke="#1428c0" stroke-dasharray="2 10 3 7 2 33 3 25 2 20 1 24 2 33 3 30 1 39" stroke-dashoffset="21" opacity="0.36"/>
<path d="M299.5 358V845" stroke="#0e1a9a" stroke-dasharray="2 14 1 34 2 31 3 19 3 22 3 23 2 7 2 24 2 9" stroke-dashoffset="41" opacity="0.46"/>
<path d="M310.5 358V845" stroke="#1428c0" stroke-dasharray="2 37 1 36 1 31 3 17 2 20 1 35 2 33 1 12 1 34" stroke-dashoffset="1" opacity="0.44"/>
<path d="M323.5 358V845" stroke="#1428c0" stroke-dasharray="2 35 3 14 2 18 3 28 1 22 2 22 2 29 2 24 3 29" stroke-dashoffset="12" opacity="0.48"/>
<path d="M298.5 358V845" stroke="#1428c0" stroke-dasharray="3 19 3 39 2 19 2 23 3 23 2 29 2 12 2 21 2 32" stroke-dashoffset="13" opacity="0.61"/>
<path d="M299.5 358V845" stroke="#0e1a9a" stroke-dasharray="3 23 2 39 3 35 2 10 2 9 2 21 2 39 2 12 1 29" stroke-dashoffset="33" opacity="0.66"/>
<path d="M343.5 358V845" stroke="#1c34d8" stroke-dasharray="2 15 1 13 2 34 1 31 2 28 2 18 1 26 2 30 2 6" stroke-dashoffset="0" opacity="0.65"/>
<path d="M327.5 358V845" stroke="#0e1a9a" stroke-dasharray="1 22 2 26 2 26 3 21 2 31 2 15 3 14 1 24 3 35" stroke-dashoffset="52" opacity="0.46"/>
<path d="M349.5 358V845" stroke="#0e1a9a" stroke-dasharray="2 12 2 34 2 39 3 24 2 20 3 34 1 37 2 18 2 20" stroke-dashoffset="44" opacity="0.69"/>
<path d="M326.5 358V845" stroke="#1c34d8" stroke-dasharray="3 36 2 19 2 29 1 23 2 28 1 16 2 16 2 35 2 28" stroke-dashoffset="48" opacity="0.37"/>
<path d="M319.5 358V845" stroke="#0e1a9a" stroke-dasharray="1 6 2 7 2 28 2 30 2 21 2 9 3 15 3 12 2 38" stroke-dashoffset="24" opacity="0.58"/>
<path d="M343.5 358V845" stroke="#1c34d8" stroke-dasharray="2 15 2 8 1 9 3 27 2 39 2 13 2 33 2 11 2 34" stroke-dashoffset="43" opacity="0.48"/>
<path d="M329.5 358V845" stroke="#1428c0" stroke-dasharray="2 16 2 25 1 14 1 34 2 32 3 23 2 13 2 12 2 35" stroke-dashoffset="13" opacity="0.42"/>
<path d="M323.5 358V845" stroke="#1c34d8" stroke-dasharray="1 18 1 37 1 10 1 28 3 19 3 37 1 28 2 39 1 40" stroke-dashoffset="4" opacity="0.47"/>
<path d="M304.5 358V845" stroke="#0e1a9a" stroke-dasharray="2 22 3 34 3 7 2 26 2 16 2 24 3 13 1 32 2 11" stroke-dashoffset="8" opacity="0.58"/>
<path d="M325.5 358V845" stroke="#1428c0" stroke-dasharray="2 21 1 37 1 24 2 38 3 37 2 9 2 13 2 17 2 31" stroke-dashoffset="57" opacity="0.47"/>
<path d="M325.5 358V845" stroke="#0e1a9a" stroke-dasharray="3 15 2 24 1 28 1 26 2 19 3 17 1 10 1 31 2 18" stroke-dashoffset="56" opacity="0.44"/>
<path d="M302.5 358V845" stroke="#0e1a9a" stroke-dasharray="2 16 2 25 2 23 2 29 2 16 3 28 2 32 3 29 1 27" stroke-dashoffset="0" opacity="0.65"/>
<path d="M301.5 358V845" stroke="#1428c0" stroke-dasharray="2 37 1 16 2 15 3 23 2 31 3 18 3 23 1 32 2 29" stroke-dashoffset="10" opacity="0.51"/>
<path d="M321.5 358V845" stroke="#0e1a9a" stroke-dasharray="2 10 2 35 1 21 3 36 2 25 1 29 3 23 1 36 3 32" stroke-dashoffset="16" opacity="0.45"/>
<path d="M299.5 358V845" stroke="#0e1a9a" stroke-dasharray="2 26 2 35 2 32 2 7 2 24 1 34 1 14 3 32 2 10" stroke-dashoffset="33" opacity="0.52"/>
<path d="M333.5 358V845" stroke="#1428c0" stroke-dasharray="2 25 2 36 2 35 3 20 2 39 2 24 3 27 2 28 2 19" stroke-dashoffset="0" opacity="0.70"/>
<path d="M307.5 358V845" stroke="#0e1a9a" stroke-dasharray="2 32 2 32 1 34 2 38 3 25 2 32 2 36 1 33 2 23" stroke-dashoffset="25" opacity="0.69"/>
<path d="M338.5 358V845" stroke="#0e1a9a" stroke-dasharray="3 30 1 38 2 28 3 25 1 14 2 10 2 38 2 11 2 18" stroke-dashoffset="50" opacity="0.38"/>
<path d="M314.5 358V845" stroke="#1c34d8" stroke-dasharray="1 25 2 10 3 18 2 8 3 39 2 10 2 22 2 13 1 35" stroke-dashoffset="38" opacity="0.45"/>
<path d="M329.5 358V845" stroke="#1c34d8" stroke-dasharray="2 32 3 24 3 34 2 15 3 26 2 34 3 8 2 34 2 29" stroke-dashoffset="3" opacity="0.44"/>
<path d="M311.5 358V845" stroke="#0e1a9a" stroke-dasharray="2 31 2 36 2 29 1 22 2 34 3 39 2 35 1 15 2 16" stroke-dashoffset="57" opacity="0.51"/>
<path d="M316.5 358V845" stroke="#0e1a9a" stroke-dasharray="1 33 1 23 3 27 3 16 2 36 3 10 2 30 2 13 1 17" stroke-dashoffset="20" opacity="0.35"/>
<path d="M326.5 358V845" stroke="#0e1a9a" stroke-dasharray="1 22 3 6 3 18 2 30 2 16 1 20 3 40 2 30 2 37" stroke-dashoffset="10" opacity="0.37"/>
<path d="M306.5 358V845" stroke="#1428c0" stroke-dasharray="3 38 3 28 3 23 1 28 2 14 2 7 2 35 2 8 2 19" stroke-dashoffset="14" opacity="0.46"/>
<path d="M315.5 358V845" stroke="#1c34d8" stroke-dasharray="1 33 3 34 2 14 3 19 3 32 2 33 2 10 2 23 3 8" stroke-dashoffset="57" opacity="0.41"/>
<path d="M314.5 358V845" stroke="#1c34d8" stroke-dasharray="3 12 1 19 2 13 3 6 2 11 2 16 2 38 2 21 3 15" stroke-dashoffset="12" opacity="0.36"/>
<path d="M332.5 358V845" stroke="#1c34d8" stroke-dasharray="2 23 2 17 3 31 3 24 3 22 3 21 3 17 2 25 2 35" stroke-dashoffset="54" opacity="0.66"/>
<path d="M338.5 358V845" stroke="#1428c0" stroke-dasharray="2 20 1 37 3 31 2 9 2 17 1 19 2 20 1 10 3 25" stroke-dashoffset="14" opacity="0.47"/>
<path d="M332.5 358V845" stroke="#1c34d8" stroke-dasharray="2 12 2 38 2 39 3 24 2 29 2 9 2 34 2 7 3 8" stroke-dashoffset="33" opacity="0.45"/>
<path d="M318.5 358V845" stroke="#1428c0" stroke-dasharray="1 27 2 36 2 8 1 9 1 12 2 11 3 18 2 33 1 23" stroke-dashoffset="2" opacity="0.59"/>
<path d="M345.5 358V845" stroke="#0e1a9a" stroke-dasharray="2 23 2 32 3 13 2 20 2 28 2 38 1 12 2 9 2 36" stroke-dashoffset="19" opacity="0.35"/>
<path d="M312.5 358V845" stroke="#0e1a9a" stroke-dasharray="1 34 2 33 2 25 2 30 1 29 1 14 3 11 2 10 2 12" stroke-dashoffset="23" opacity="0.38"/>
<path d="M333.5 358V845" stroke="#1c34d8" stroke-dasharray="2 7 2 10 2 11 1 11 2 28 2 17 2 25 2 11 1 27" stroke-dashoffset="17" opacity="0.40"/>
<path d="M348.5 358V845" stroke="#1428c0" stroke-dasharray="2 20 2 13 2 10 3 7 1 35 3 7 2 40 3 10 1 36" stroke-dashoffset="59" opacity="0.63"/>
<path d="M332.5 358V845" stroke="#1428c0" stroke-dasharray="1 19 2 15 2 31 1 9 3 27 2 37 3 13 2 8 2 23" stroke-dashoffset="46" opacity="0.67"/>
<path d="M328.5 358V845" stroke="#1c34d8" stroke-dasharray="3 9 2 29 2 39 2 10 2 27 3 37 3 32 2 24 1 38" stroke-dashoffset="54" opacity="0.41"/>
<path d="M339.5 358V845" stroke="#1c34d8" stroke-dasharray="2 7 2 10 2 35 1 28 3 34 2 19 3 29 2 11 2 7" stroke-dashoffset="13" opacity="0.51"/>
<path d="M307.5 358V845" stroke="#0e1a9a" stroke-dasharray="2 7 2 35 3 32 3 35 3 39 1 12 2 8 3 29 3 15" stroke-dashoffset="16" opacity="0.59"/>
<path d="M325.5 358V845" stroke="#1428c0" stroke-dasharray="2 21 2 38 1 15 1 38 2 40 1 37 2 38 2 14 2 9" stroke-dashoffset="19" opacity="0.40"/>
<path d="M305.5 358V845" stroke="#1c34d8" stroke-dasharray="1 17 2 18 1 7 3 16 2 35 3 25 1 34 3 7 2 34" stroke-dashoffset="30" opacity="0.68"/>
<path d="M310.5 358V845" stroke="#0e1a9a" stroke-dasharray="1 12 2 40 2 7 1 13 2 39 1 29 2 7 3 17 2 33" stroke-dashoffset="34" opacity="0.57"/>
<path d="M333.5 358V845" stroke="#0e1a9a" stroke-dasharray="2 17 3 21 1 30 1 12 3 30 2 10 2 35 2 13 1 39" stroke-dashoffset="10" opacity="0.33"/>
<path d="M311.5 358V845" stroke="#1428c0" stroke-dasharray="2 36 3 39 1 30 1 22 2 17 3 13 3 32 2 9 1 33" stroke-dashoffset="49" opacity="0.40"/>
<path d="M334.5 358V845" stroke="#1c34d8" stroke-dasharray="3 11 1 8 2 18 2 12 2 15 2 26 3 13 3 8 1 30" stroke-dashoffset="5" opacity="0.64"/>
<rect x="1020" y="358" width="73" height="487" fill="#fff" opacity="0.205"/>
<path d="M330.0 358V845" stroke="#141e88" stroke-width="1.1" stroke-dasharray="9 4 10 6 11 8 15 4 11 2 6 5 13 10" stroke-dashoffset="25" opacity="0.34664571312705367"/>
<path d="M330.0 358V845" stroke="#4868e0" stroke-width="1.0" stroke-dasharray="2 50 1 32 2 39 1 25 1 35 1 41 1 40" stroke-dashoffset="5" opacity="0.55"/>
<path d="M368.8 358V845" stroke="#141e88" stroke-width="1.1" stroke-dasharray="8 9 13 5 5 9 8 2 9 9 15 7 9 10" stroke-dashoffset="5" opacity="0.47272274022925004"/>
<path d="M368.8 358V845" stroke="#4868e0" stroke-width="1.0" stroke-dasharray="1 49 1 29 1 20 1 21 2 20 1 14 1 46" stroke-dashoffset="14" opacity="0.55"/>
<path d="M393.0 358V845" stroke="#141e88" stroke-width="1.1" stroke-dasharray="5 3 9 8 8 4 7 5 7 3 10 4 14 10" stroke-dashoffset="25" opacity="0.3348732460653269"/>
<path d="M393.0 358V845" stroke="#4868e0" stroke-width="1.0" stroke-dasharray="1 27 1 15 1 12 2 49 2 18 2 30 1 42" stroke-dashoffset="8" opacity="0.55"/>
<path d="M408.3 358V845" stroke="#141e88" stroke-width="1.1" stroke-dasharray="13 6 11 7 10 3 4 4 5 2 15 6 14 8" stroke-dashoffset="3" opacity="0.31379808502711243"/>
<path d="M408.3 358V845" stroke="#4868e0" stroke-width="1.0" stroke-dasharray="1 31 2 45 2 28 1 44 1 25 1 43 2 47" stroke-dashoffset="5" opacity="0.55"/>
<path d="M524.0 358V845" stroke="#141e88" stroke-width="1.1" stroke-dasharray="8 3 13 3 4 10 5 8 11 3 14 3 12 7" stroke-dashoffset="15" opacity="0.31608640308331964"/>
<path d="M524.0 358V845" stroke="#4868e0" stroke-width="1.0" stroke-dasharray="1 37 2 35 2 37 1 29 2 39 2 19 2 49" stroke-dashoffset="19" opacity="0.55"/>
<path d="M558.0 358V845" stroke="#141e88" stroke-width="1.1" stroke-dasharray="4 10 6 5 7 4 15 4 7 7 8 4 12 8" stroke-dashoffset="13" opacity="0.3576510606132836"/>
<path d="M558.0 358V845" stroke="#4868e0" stroke-width="1.0" stroke-dasharray="1 11 2 47 1 36 1 48 2 49 2 24 1 31" stroke-dashoffset="27" opacity="0.55"/>
<path d="M582.3 358V845" stroke="#141e88" stroke-width="1.1" stroke-dasharray="11 3 9 6 8 5 11 7 8 7 5 4 10 5" stroke-dashoffset="26" opacity="0.34040465118677565"/>
<path d="M582.3 358V845" stroke="#4868e0" stroke-width="1.0" stroke-dasharray="1 14 2 20 1 42 1 33 2 40 2 49 1 40" opacity="0.55"/>
<path d="M630.0 358V845" stroke="#141e88" stroke-width="1.1" stroke-dasharray="12 8 10 5 3 5 7 3 5 5 4 6 14 5" stroke-dashoffset="13" opacity="0.3700772471289958"/>
<path d="M630.0 358V845" stroke="#4868e0" stroke-width="1.0" stroke-dasharray="2 18 1 33 2 22 1 30 2 12 2 32 2 26" stroke-dashoffset="20" opacity="0.55"/>
<path d="M647.0 358V845" stroke="#141e88" stroke-width="1.1" stroke-dasharray="3 6 5 5 5 5 8 3 7 10 16 4 8 5" stroke-dashoffset="9" opacity="0.4998626819470614"/>
<path d="M647.0 358V845" stroke="#4868e0" stroke-width="1.0" stroke-dasharray="1 27 1 48 2 21 2 34 1 42 1 47 2 38" stroke-dashoffset="5" opacity="0.55"/>
<path d="M653.0 358V845" stroke="#141e88" stroke-width="1.1" stroke-dasharray="13 8 15 9 7 4 12 5 7 9 8 9 6 9" stroke-dashoffset="1" opacity="0.48907611840349147"/>
<path d="M653.0 358V845" stroke="#4868e0" stroke-width="1.0" stroke-dasharray="1 35 1 32 2 13 2 39 2 49 2 34 1 28" stroke-dashoffset="19" opacity="0.55"/>
<path d="M701.6 358V845" stroke="#141e88" stroke-width="1.1" stroke-dasharray="3 4 9 4 7 5 12 2 10 7 12 2 14 3" stroke-dashoffset="29" opacity="0.35330982666786803"/>
<path d="M701.6 358V845" stroke="#4868e0" stroke-width="1.0" stroke-dasharray="1 40 1 45 1 29 1 15 2 15 1 22 2 49" stroke-dashoffset="6" opacity="0.55"/>
<path d="M778.4 358V845" stroke="#141e88" stroke-width="1.1" stroke-dasharray="6 6 14 9 3 5 8 8 5 10 4 9 8 2" stroke-dashoffset="21" opacity="0.37598581955063726"/>
<path d="M778.4 358V845" stroke="#4868e0" stroke-width="1.0" stroke-dasharray="2 26 1 46 1 17 2 15 2 28 1 48 2 12" stroke-dashoffset="28" opacity="0.55"/>
<path d="M798.5 358V845" stroke="#141e88" stroke-width="1.1" stroke-dasharray="10 7 6 8 7 2 10 9 8 4 10 6 6 4" stroke-dashoffset="27" opacity="0.40407998708784704"/>
<path d="M798.5 358V845" stroke="#4868e0" stroke-width="1.0" stroke-dasharray="1 18 2 11 1 31 1 25 1 37 1 22 1 38" stroke-dashoffset="6" opacity="0.55"/>
<path d="M862.3 358V845" stroke="#141e88" stroke-width="1.1" stroke-dasharray="10 10 6 6 6 4 12 3 7 3 7 7 5 4" stroke-dashoffset="28" opacity="0.33503756825531744"/>
<path d="M862.3 358V845" stroke="#4868e0" stroke-width="1.0" stroke-dasharray="1 21 1 20 2 27 2 34 2 47 2 38 2 13" stroke-dashoffset="26" opacity="0.55"/>
<path d="M885.0 358V845" stroke="#141e88" stroke-width="1.1" stroke-dasharray="13 8 4 2 10 6 11 7 14 9 13 10 5 9" stroke-dashoffset="7" opacity="0.4984177670746324"/>
<path d="M885.0 358V845" stroke="#4868e0" stroke-width="1.0" stroke-dasharray="2 32 2 19 1 20 2 11 1 18 2 37 1 14" stroke-dashoffset="21" opacity="0.55"/>
<path d="M952.0 358V845" stroke="#141e88" stroke-width="1.1" stroke-dasharray="10 7 14 7 10 4 11 5 12 9 10 5 13 3" opacity="0.35426476728192635"/>
<path d="M952.0 358V845" stroke="#4868e0" stroke-width="1.0" stroke-dasharray="2 18 2 43 2 46 1 17 2 17 1 42 2 26" stroke-dashoffset="13" opacity="0.55"/>
<path d="M982.0 358V845" stroke="#141e88" stroke-width="1.1" stroke-dasharray="13 9 14 3 8 5 6 3 15 7 15 10 15 4" stroke-dashoffset="19" opacity="0.38337651046373566"/>
<path d="M982.0 358V845" stroke="#4868e0" stroke-width="1.0" stroke-dasharray="2 36 2 49 2 16 2 27 2 48 1 12 1 37" stroke-dashoffset="15" opacity="0.55"/>
<path d="M999.0 358V845" stroke="#141e88" stroke-width="1.1" stroke-dasharray="15 8 7 4 12 10 10 7 8 8 7 6 15 3" stroke-dashoffset="5" opacity="0.39460303508624267"/>
<path d="M999.0 358V845" stroke="#4868e0" stroke-width="1.0" stroke-dasharray="2 31 2 11 2 13 2 14 1 41 2 42 2 22" stroke-dashoffset="20" opacity="0.55"/>
<path d="M1047.6 358V845" stroke="#141e88" stroke-width="1.1" stroke-dasharray="10 7 15 8 12 10 4 2 6 3 16 9 13 8" stroke-dashoffset="4" opacity="0.45114550428068806"/>
<path d="M1047.6 358V845" stroke="#4868e0" stroke-width="1.0" stroke-dasharray="1 10 2 49 1 34 1 25 2 38 2 25 1 28" stroke-dashoffset="13" opacity="0.55"/>
<path d="M1109.4 358V845" stroke="#141e88" stroke-width="1.1" stroke-dasharray="10 9 16 2 13 3 9 7 4 7 12 5 10 5" stroke-dashoffset="8" opacity="0.3304694174744749"/>
<path d="M1109.4 358V845" stroke="#4868e0" stroke-width="1.0" stroke-dasharray="2 47 1 49 2 37 2 32 2 20 2 40 2 37" stroke-dashoffset="15" opacity="0.55"/>
<path d="M1213.0 358V845" stroke="#141e88" stroke-width="1.1" stroke-dasharray="7 9 3 3 9 7 13 9 14 3 16 2 9 5" stroke-dashoffset="6" opacity="0.3047817096723433"/>
<path d="M1213.0 358V845" stroke="#4868e0" stroke-width="1.0" stroke-dasharray="2 32 1 50 1 49 1 16 1 44 1 20 1 46" stroke-dashoffset="25" opacity="0.55"/>
<path d="M1221.0 358V845" stroke="#141e88" stroke-width="1.1" stroke-dasharray="7 3 4 5 4 9 6 5 4 8 5 3 8 9" stroke-dashoffset="14" opacity="0.4835791425700331"/>
<path d="M1221.0 358V845" stroke="#4868e0" stroke-width="1.0" stroke-dasharray="2 26 2 25 1 32 1 40 2 43 2 15 2 29" stroke-dashoffset="7" opacity="0.55"/>
<path d="M299.0 358V845" stroke="#3c58c8" stroke-width="1.1" stroke-dasharray="4 5 8 4 10 2 5 3 11 5 8 4 6 6" stroke-dashoffset="20" opacity="0.5"/>
<path d="M299.0 358V845" stroke="#c8d8ff" stroke-width="1.0" stroke-dasharray="1 6 2 17 2 19 1 15 2 18 1 12 2 8 1 21 1 10" stroke-dashoffset="28" opacity="0.8"/>
<path d="M314.4 358V845" stroke="#4a68d4" stroke-width="1.1" stroke-dasharray="11 5 10 2 9 2 3 4 14 3 11 4 3 4" stroke-dashoffset="20" opacity="0.5"/>
<path d="M314.4 358V845" stroke="#c8d8ff" stroke-width="1.0" stroke-dasharray="2 10 2 16 2 19 2 13 2 10 2 7 2 11 1 15 1 15" stroke-dashoffset="1" opacity="0.8"/>
<path d="M427.2 358V845" stroke="#3c58c8" stroke-width="1.1" stroke-dasharray="5 2 13 2 11 4 11 1 9 6 12 1 9 3" stroke-dashoffset="1" opacity="0.5"/>
<path d="M427.2 358V845" stroke="#c8d8ff" stroke-width="1.0" stroke-dasharray="2 20 2 15 2 20 1 11 1 17 1 21 2 14 2 14 1 17" stroke-dashoffset="15" opacity="0.8"/>
<path d="M541.2 358V845" stroke="#6a88e0" stroke-width="1.1" stroke-dashoffset="20" opacity="0.7"/>
<path d="M541.2 358V845" stroke="#c8d8ff" stroke-width="1.0" stroke-dasharray="2 6 1 20 1 17 2 15 2 9 1 14 2 22 1 16 1 11" stroke-dashoffset="9" opacity="0.8"/>
<path d="M548.0 358V845" stroke="#3450c0" stroke-width="1.1" stroke-dashoffset="12" opacity="0.7"/>
<path d="M548.0 358V845" stroke="#c8d8ff" stroke-width="1.0" stroke-dasharray="2 12 1 6 2 6 2 9 1 6 1 21 1 11 2 9 2 21" stroke-dashoffset="27" opacity="0.8"/>
<path d="M1148.6 358V845" stroke="#3858cc" stroke-width="1.1" stroke-dashoffset="10" opacity="0.7"/>
<path d="M1148.6 358V845" stroke="#c8d8ff" stroke-width="1.0" stroke-dasharray="1 18 2 19 2 7 2 15 1 18 1 11 2 20 2 20 1 12" stroke-dashoffset="16" opacity="0.8"/>
<path d="M1167.1 358V845" stroke="#2c4cc4" stroke-width="1.1" stroke-dashoffset="9" opacity="0.7"/>
<path d="M1167.1 358V845" stroke="#c8d8ff" stroke-width="1.0" stroke-dasharray="1 6 1 21 1 20 2 14 2 22 1 15 2 10 1 8 2 15" stroke-dashoffset="18" opacity="0.8"/>
<path d="M1075.9 358V845" stroke="#2a3c9c" stroke-width="1.1" stroke-dashoffset="3" opacity="0.7"/>
<path d="M1075.9 358V845" stroke="#c8d8ff" stroke-width="1.0" stroke-dasharray="2 20 2 14 1 11 2 16 1 7 2 6 1 9 1 9 1 12" stroke-dashoffset="3" opacity="0.4"/>
<path d="M664.9 358V845" stroke="#2c44b0" stroke-width="1.1" stroke-dashoffset="9" opacity="0.7"/>
<path d="M664.9 358V845" stroke="#c8d8ff" stroke-width="1.0" stroke-dasharray="1 17 1 19 1 9 2 11 1 5 1 21 1 12 2 7 1 20" stroke-dashoffset="20" opacity="0.8"/>
<path d="M505.4 358V845" stroke="#9fb8f4" stroke-width="1.1" opacity="0.85"/>
<path d="M505.4 358V845" stroke="#ffffff" stroke-width="1.0" stroke-dasharray="3 8 4 5 2 2 3 8 5 9 2 3 1 5 3 6 2 4" stroke-dashoffset="26" opacity="0.9"/>
<path d="M669.7 358V845" stroke="#9fb8f4" stroke-width="1.1" opacity="0.85"/>
<path d="M669.7 358V845" stroke="#ffffff" stroke-width="1.0" stroke-dasharray="5 4 2 5 2 6 5 4 4 8 3 4 1 6 4 5 2 8" stroke-dashoffset="5" opacity="0.9"/>
<path d="M916.4 358V845" stroke="#8aa8f0" stroke-width="1.1" opacity="0.85"/>
<path d="M916.4 358V845" stroke="#ffffff" stroke-width="1.0" stroke-dasharray="2 8 2 8 5 2 4 6 3 3 2 2 1 8 2 8 3 6" stroke-dashoffset="4" opacity="0.9"/>
<path d="M1115.5 358V845" stroke="#a8c4fa" stroke-width="1.1" opacity="0.85"/>
<path d="M1115.5 358V845" stroke="#ffffff" stroke-width="1.0" stroke-dasharray="1 6 2 2 5 2 2 7 4 4 5 5 4 5 4 9 1 6" stroke-dashoffset="18" opacity="0.9"/>
<path d="M1191.0 358V845" stroke="#9fb8f4" stroke-width="1.1" opacity="0.85"/>
<path d="M1191.0 358V845" stroke="#ffffff" stroke-width="1.0" stroke-dasharray="3 5 3 4 2 4 2 5 1 6 4 5 4 8 4 8 2 4" stroke-dashoffset="30" opacity="0.9"/>
<path d="M353.1 358V845" stroke="#3a0a10" stroke-width="4.0" opacity="0.85"/>
<path d="M353.1 358V845" stroke="#f0643a" stroke-width="2.4"/>
<path d="M442.6 358V845" stroke="#3a0a10" stroke-width="2.9000000000000004" opacity="0.85"/>
<path d="M442.6 358V845" stroke="#cc6450" stroke-width="1.3"/>
<path d="M442.6 358V845" stroke="#fff0a0" stroke-width="1.3" stroke-dasharray="1 26 1 30 2 38 1 37 2 28 1 22 2 17 1 23" opacity="0.95"/>
<path d="M466.6 358V845" stroke="#3a0a10" stroke-width="2.9000000000000004" opacity="0.85"/>
<path d="M466.6 358V845" stroke="#cc6454" stroke-width="1.3"/>
<path d="M595.0 358V845" stroke="#3a0a10" stroke-width="3.3" opacity="0.85"/>
<path d="M595.0 358V845" stroke="#d87058" stroke-width="1.7" stroke-dasharray="7 2 6 1 5 1 9 1 8 1 5 1 5 2 6 1"/>
<path d="M595.0 358V845" stroke="#ff8a28" stroke-width="1.7" stroke-dasharray="3 9 6 8 7 16 3 6 6 7 5 12 4 13 2 15" opacity="0.95"/>
<path d="M595.0 358V845" stroke="#ffe060" stroke-width="1.7" stroke-dasharray="3 11 2 27 1 13 3 30 3 14 1 10 1 17 3 25" stroke-dashoffset="7" opacity="0.95"/>
<path d="M595.0 358V845" stroke="#ffe8e0" stroke-width="1.7" stroke-dasharray="1 22 2 16 1 17 1 13 2 35 1 22 2 32 1 34" stroke-dashoffset="13" opacity="0.9"/>
<path d="M619.4 358V845" stroke="#3a0a10" stroke-width="3.1" opacity="0.85"/>
<path d="M619.4 358V845" stroke="#d0685a" stroke-width="1.5"/>
<path d="M658.0 358V845" stroke="#3a0a10" stroke-width="4.2" opacity="0.85"/>
<path d="M658.0 358V845" stroke="#d8684c" stroke-width="2.6"/>
<path d="M810.6 358V845" stroke="#dfe6ff" stroke-width="1.1" opacity="0.95"/>
<path d="M810.6 358V845" stroke="#ffffff" stroke-width="1.1" stroke-dasharray="19 4 13 8 9 8 12 6 6 4 15 3"/>
<path d="M900.3 358V845" stroke="#3a0a10" stroke-width="3.5" opacity="0.85"/>
<path d="M900.3 358V845" stroke="#d4623e" stroke-width="1.9"/>
<path d="M924.6 358V845" stroke="#3a0a10" stroke-width="3.0" opacity="0.85"/>
<path d="M924.6 358V845" stroke="#cc5c44" stroke-width="1.4"/>
<path d="M963.3 358V845" stroke="#3a0a10" stroke-width="2.9000000000000004" opacity="0.85"/>
<path d="M963.3 358V845" stroke="#c85a48" stroke-width="1.3"/>
<path d="M1021.4 358V845" stroke="#f4e49a" stroke-width="1.5"/>
<path d="M1021.4 358V845" stroke="#ffb040" stroke-width="1.4" stroke-dasharray="6 17 4 25 3 23 5 25 3 15 4 18"/>
<path d="M1036.7 358V845" stroke="#ffd868" stroke-width="1.3"/>
<path d="M1036.7 358V845" stroke="#ffffe8" stroke-width="1.3" stroke-dasharray="7 5 10 3 5 3 8 3 11 3 7 7 6 2"/>
<path d="M1057.0 358V845" stroke="#c01c2c" stroke-width="2.2" opacity="0.7"/>
<path d="M1180.9 358V845" stroke="#3a0a10" stroke-width="3.5" opacity="0.85"/>
<path d="M1180.9 358V845" stroke="#ff9a28" stroke-width="1.9"/>
<path d="M1186.7 358V845" stroke="#3a0a10" stroke-width="2.9000000000000004" opacity="0.85"/>
<path d="M1186.7 358V845" stroke="#d86038" stroke-width="1.3"/>
<path d="M1205.0 358V845" stroke="#3a0a10" stroke-width="3.7" opacity="0.85"/>
<path d="M1205.0 358V845" stroke="#f0602a" stroke-width="2.1" stroke-dasharray="9 2 11 2 8 1 13 1 10 1 13 2"/>
<path d="M1229.2 358V845" stroke="#3a0a10" stroke-width="3.1" opacity="0.85"/>
<path d="M1229.2 358V845" stroke="#e0684a" stroke-width="1.5" stroke-dasharray="11 3 15 2 11 2 7 2 13 3 7 1"/>
<rect x="744.9" y="365.1" width="67.7" height="19.5" fill="#143cb0" opacity="0.45"/>
<rect x="746.7" y="365.1" width="64.1" height="19.5" fill="#4f86ee" opacity="0.75"/>
<path d="M747.9 364.1V384.6 M809.6 364.1V384.6" stroke="#f4f8ff" stroke-width="1.6" stroke-dasharray="4 4 3 6 2 3 3 4 3 2 3 4"/>
<rect x="748.9" y="364.1" width="59.7" height="25.5" fill="#ff5814"/>
<path d="M741.9 387.1H815.6" stroke="#e8662e" stroke-width="5" stroke-dasharray="1 1 2 2 1 1 1 1 1 2 1 1 2 2 1 2 1 1"/>
<path d="M741.9 387.1H815.6" stroke="#5a1208" stroke-width="5" stroke-dasharray="1 3 1 6 1 5 1 3 1 3 1 6 1 6 1 5 1 5" stroke-dashoffset="3"/>
<path d="M752.9 388.1H805.6" stroke="#ffc020" stroke-width="3" stroke-dasharray="2 13 2 7 2 14 2 7 2 5 2 12 1 12"/>
<rect x="744.9" y="579.0" width="67.7" height="19.0" fill="#143cb0" opacity="0.45"/>
<rect x="746.7" y="579.0" width="64.1" height="19.0" fill="#4f86ee" opacity="0.75"/>
<path d="M747.9 578V598 M809.6 578V598" stroke="#f4f8ff" stroke-width="1.6" stroke-dasharray="2 5 3 6 4 5 3 5 1 2 4 7"/>
<rect x="748.9" y="578.0" width="59.7" height="25.0" fill="#ff5814"/>
<path d="M741.9 600.5H815.6" stroke="#e8662e" stroke-width="5" stroke-dasharray="2 1 2 1 1 2 2 1 2 2 2 1 1 2 1 1 1 1"/>
<path d="M741.9 600.5H815.6" stroke="#5a1208" stroke-width="5" stroke-dasharray="1 3 1 2 1 3 1 3 1 2 1 2 1 2 1 3 1 6" stroke-dashoffset="3"/>
<path d="M752.9 601.5H805.6" stroke="#ffc020" stroke-width="3" stroke-dasharray="2 6 1 7 2 6 2 13 2 10 1 9 2 10"/>
<rect x="744.9" y="797.6" width="67.7" height="13.4" fill="#143cb0" opacity="0.45"/>
<rect x="746.7" y="797.6" width="64.1" height="13.4" fill="#4f86ee" opacity="0.75"/>
<path d="M747.9 796.6V811 M809.6 796.6V811" stroke="#f4f8ff" stroke-width="1.6" stroke-dasharray="3 4 4 5 2 4 2 7 1 4 2 5"/>
<rect x="748.9" y="796.6" width="59.7" height="19.4" fill="#ff5814"/>
<path d="M741.9 813.5H815.6" stroke="#e8662e" stroke-width="5" stroke-dasharray="1 2 1 1 1 1 2 1 2 2 2 2 2 1 2 1 1 2"/>
<path d="M741.9 813.5H815.6" stroke="#5a1208" stroke-width="5" stroke-dasharray="1 6 1 4 1 4 1 5 1 4 1 6 1 2 1 4 1 5" stroke-dashoffset="3"/>
<path d="M752.9 814.5H805.6" stroke="#ffc020" stroke-width="3" stroke-dasharray="1 7 2 8 1 10 2 11 1 14 2 15 1 14"/>
<rect x="370.0" y="520.2" width="70.0" height="19.2" fill="#143cb0" opacity="0.45"/>
<rect x="371.8" y="520.2" width="66.4" height="19.2" fill="#4f86ee" opacity="0.75"/>
<path d="M373.0 519.2V539.4 M437.0 519.2V539.4" stroke="#f4f8ff" stroke-width="1.6" stroke-dasharray="3 6 3 5 2 7 3 3 3 3 2 5"/>
<rect x="374.0" y="519.2" width="62.0" height="20.2" fill="#ff5814"/>
<rect x="494.9" y="414.9" width="66.9" height="13.9" fill="#143cb0" opacity="0.45"/>
<rect x="496.7" y="414.9" width="63.3" height="13.9" fill="#4f86ee" opacity="0.75"/>
<path d="M497.9 413.9V428.8 M558.8 413.9V428.8" stroke="#f4f8ff" stroke-width="1.6" stroke-dasharray="1 2 3 5 4 2 2 3 4 6 1 4"/>
<rect x="498.9" y="413.9" width="58.9" height="19.9" fill="#ff5814"/>
<path d="M490.9 431.3H565.8" stroke="#e8662e" stroke-width="5" stroke-dasharray="2 2 1 2 1 1 1 2 1 2 1 1 2 2 2 1 2 2"/>
<path d="M490.9 431.3H565.8" stroke="#5a1208" stroke-width="5" stroke-dasharray="1 5 1 4 1 5 1 4 1 3 1 5 1 3 1 4 1 5" stroke-dashoffset="3"/>
<path d="M502.9 432.3H554.8" stroke="#ffc020" stroke-width="3" stroke-dasharray="2 13 2 15 2 11 1 9 1 8 1 7 1 11"/>
<rect x="494.9" y="613.0" width="66.9" height="28.3" fill="#143cb0" opacity="0.45"/>
<rect x="496.7" y="613.0" width="63.3" height="28.3" fill="#4f86ee" opacity="0.75"/>
<path d="M497.9 612V641.3 M558.8 612V641.3" stroke="#f4f8ff" stroke-width="1.6" stroke-dasharray="2 6 3 7 4 3 3 7 1 3 1 3"/>
<rect x="498.9" y="612.0" width="58.9" height="34.3" fill="#ff5814"/>
<path d="M490.9 643.8H565.8" stroke="#e8662e" stroke-width="5" stroke-dasharray="2 2 1 1 1 2 1 2 1 1 2 2 1 1 2 2 2 1"/>
<path d="M490.9 643.8H565.8" stroke="#5a1208" stroke-width="5" stroke-dasharray="1 3 1 6 1 4 1 5 1 4 1 4 1 6 1 4 1 4" stroke-dashoffset="3"/>
<path d="M502.9 644.8H554.8" stroke="#ffc020" stroke-width="3" stroke-dasharray="1 7 1 13 2 12 2 9 1 12 2 13 2 14"/>
<rect x="494.9" y="810.5" width="66.9" height="34.5" fill="#143cb0" opacity="0.45"/>
<rect x="496.7" y="810.5" width="63.3" height="34.5" fill="#4f86ee" opacity="0.75"/>
<path d="M497.9 809.5V845 M558.8 809.5V845" stroke="#f4f8ff" stroke-width="1.6" stroke-dasharray="1 5 2 5 3 6 2 4 1 6 3 5"/>
<rect x="498.9" y="809.5" width="58.9" height="40.5" fill="#ff5814"/>
<path d="M490.9 847.5H565.8" stroke="#e8662e" stroke-width="5" stroke-dasharray="2 2 1 1 2 2 1 2 1 1 1 2 2 1 1 1 1 2"/>
<path d="M490.9 847.5H565.8" stroke="#5a1208" stroke-width="5" stroke-dasharray="1 3 1 5 1 2 1 2 1 5 1 3 1 2 1 5 1 3" stroke-dashoffset="3"/>
<path d="M502.9 848.5H554.8" stroke="#ffc020" stroke-width="3" stroke-dasharray="2 15 2 12 2 15 2 12 1 6 1 10 2 10"/>
<rect x="870.8" y="439.0" width="65.2" height="59.3" fill="#143cb0" opacity="0.45"/>
<rect x="872.6" y="439.0" width="61.6" height="59.3" fill="#4f86ee" opacity="0.75"/>
<path d="M873.8 438V498.3 M933.0 438V498.3" stroke="#f4f8ff" stroke-width="1.6" stroke-dasharray="2 3 3 5 3 3 2 3 2 4 2 7"/>
<rect x="874.8" y="438.0" width="57.2" height="60.3" fill="#ff5814"/>
<path d="M888.0 439.0V495.3" stroke="#ffd020" stroke-width="1" stroke-dasharray="6 2 7 4 6 4 7 3 7 3 2 5" opacity="0.82"/>
<path d="M889.5 439.0V495.3" stroke="#ffe850" stroke-width="1" stroke-dasharray="8 1 9 5 8 5 5 2 5 5 7 1" opacity="0.93"/>
<path d="M892.0 439.0V495.3" stroke="#fff090" stroke-width="1" stroke-dasharray="3 3 5 2 6 3 2 2 5 2 6 3" opacity="0.95"/>
<path d="M894.0 439.0V495.3" stroke="#fff090" stroke-width="1" stroke-dasharray="7 2 8 4 5 3 10 3 3 3 6 2" opacity="0.89"/>
<path d="M895.5 439.0V495.3" stroke="#fff090" stroke-width="1" stroke-dasharray="7 2 3 3 7 3 6 1 10 2 5 4" opacity="0.98"/>
<path d="M897.5 439.0V495.3" stroke="#fff090" stroke-width="1" stroke-dasharray="3 3 7 2 10 3 10 4 8 3 7 2" opacity="0.91"/>
<path d="M899.0 439.0V495.3" stroke="#fff090" stroke-width="1" stroke-dasharray="5 2 8 4 10 5 7 5 7 2 6 2" opacity="0.97"/>
<path d="M900.5 439.0V495.3" stroke="#ffc010" stroke-width="1" stroke-dasharray="7 4 8 2 7 1 5 2 5 3 6 1" opacity="0.86"/>
<path d="M902.0 439.0V495.3" stroke="#fff090" stroke-width="1" stroke-dasharray="8 1 6 1 8 5 8 3 6 4 3 2" opacity="0.84"/>
<path d="M904.0 439.0V495.3" stroke="#ffd020" stroke-width="1" stroke-dasharray="6 2 3 3 5 2 6 2 7 2 8 3" opacity="0.70"/>
<path d="M906.0 439.0V495.3" stroke="#fff090" stroke-width="1" stroke-dasharray="8 2 8 4 9 4 5 3 3 2 4 4" opacity="0.94"/>
<path d="M908.0 439.0V495.3" stroke="#ffe850" stroke-width="1" stroke-dasharray="5 4 5 1 6 5 6 5 5 2 3 3" opacity="0.79"/>
<path d="M909.5 439.0V495.3" stroke="#ffe850" stroke-width="1" stroke-dasharray="3 2 9 2 9 4 5 5 9 3 3 2" opacity="0.74"/>
<path d="M911.0 439.0V495.3" stroke="#ffb010" stroke-width="1" stroke-dasharray="3 2 4 3 4 5 4 4 8 5 10 2" opacity="0.71"/>
<path d="M913.5 439.0V495.3" stroke="#ffd020" stroke-width="1" stroke-dasharray="4 2 7 2 6 2 4 3 8 3 8 3" opacity="0.89"/>
<path d="M916.0 439.0V495.3" stroke="#ffc010" stroke-width="1" stroke-dasharray="3 4 6 4 6 2 4 1 8 3 5 5" opacity="0.81"/>
<path d="M918.0 439.0V495.3" stroke="#ffc010" stroke-width="1" stroke-dasharray="4 4 7 5 6 1 7 4 9 5 5 4" opacity="0.72"/>
<rect x="888.0" y="438.0" width="31.5" height="2.5" fill="#ffd860" opacity="0.8"/>
<rect x="866.8" y="485.3" width="5" height="10" fill="#ffe040" opacity="0.85"/>
<rect x="934.0" y="485.3" width="3" height="10" fill="#9fc0ff" opacity="0.7"/>
<rect x="870.8" y="664.8" width="65.2" height="47.4" fill="#143cb0" opacity="0.45"/>
<rect x="872.6" y="664.8" width="61.6" height="47.4" fill="#4f86ee" opacity="0.75"/>
<path d="M873.8 663.8V712.2 M933.0 663.8V712.2" stroke="#f4f8ff" stroke-width="1.6" stroke-dasharray="2 3 3 3 2 6 1 6 2 3 4 6"/>
<rect x="874.8" y="663.8" width="57.2" height="48.4" fill="#ff5814"/>
<path d="M888.0 664.8V709.2" stroke="#ffc010" stroke-width="1" stroke-dasharray="6 2 3 3 9 3 4 4 2 2 10 4" opacity="0.71"/>
<path d="M890.5 664.8V709.2" stroke="#ffb010" stroke-width="1" stroke-dasharray="6 2 7 3 6 2 3 1 7 5 10 2" opacity="0.76"/>
<path d="M892.0 664.8V709.2" stroke="#ffc010" stroke-width="1" stroke-dasharray="3 4 5 2 4 4 4 5 2 5 5 3" opacity="0.85"/>
<path d="M894.0 664.8V709.2" stroke="#ffc010" stroke-width="1" stroke-dasharray="9 3 6 4 7 4 3 2 4 3 4 5" opacity="0.76"/>
<path d="M896.5 664.8V709.2" stroke="#ffb010" stroke-width="1" stroke-dasharray="5 2 8 3 8 2 9 4 5 5 9 2" opacity="0.87"/>
<path d="M898.5 664.8V709.2" stroke="#ffc010" stroke-width="1" stroke-dasharray="5 5 10 3 10 4 8 4 6 4 10 2" opacity="0.75"/>
<path d="M901.5 664.8V709.2" stroke="#ffb010" stroke-width="1" stroke-dasharray="6 4 9 4 2 1 2 3 4 3 8 2" opacity="0.81"/>
<path d="M903.5 664.8V709.2" stroke="#ffd020" stroke-width="1" stroke-dasharray="4 4 3 5 5 2 2 4 7 5 5 3" opacity="0.88"/>
<path d="M906.5 664.8V709.2" stroke="#ffd020" stroke-width="1" stroke-dasharray="2 4 8 2 2 1 9 1 7 3 7 3" opacity="0.84"/>
<path d="M909.0 664.8V709.2" stroke="#ffd020" stroke-width="1" stroke-dasharray="3 3 3 4 4 1 9 4 5 1 2 2" opacity="0.73"/>
<path d="M911.0 664.8V709.2" stroke="#ffb010" stroke-width="1" stroke-dasharray="3 3 8 3 8 5 8 2 5 3 8 5" opacity="0.95"/>
<path d="M914.0 664.8V709.2" stroke="#fff090" stroke-width="1" stroke-dasharray="3 2 5 5 5 4 4 4 9 5 7 3" opacity="0.75"/>
<path d="M916.0 664.8V709.2" stroke="#ffd020" stroke-width="1" stroke-dasharray="3 4 6 3 4 5 7 4 5 3 6 1" opacity="0.71"/>
<path d="M919.0 664.8V709.2" stroke="#ffd020" stroke-width="1" stroke-dasharray="5 4 8 4 7 2 7 4 4 3 3 4" opacity="0.83"/>
<rect x="888.0" y="663.8" width="31.5" height="2.5" fill="#ffd860" opacity="0.8"/>
<rect x="866.8" y="699.2" width="5" height="10" fill="#ffe040" opacity="0.85"/>
<rect x="934.0" y="699.2" width="3" height="10" fill="#9fc0ff" opacity="0.7"/>
<path d="M535.2 358V845" stroke="#5cbc58" stroke-width="1.2" stroke-dasharray="2 2"/>
<path d="M608.5 358V845" stroke="#5cbc58" stroke-width="1.2" stroke-dasharray="2 2"/>
<path d="M571.5 358V845" stroke="#4a86d8" stroke-width="1.4"/>
</g>
<text x="297.5" y="444.5" font-family="'DejaVu Sans','Liberation Sans',sans-serif" font-size="14" textLength="150.5" fill="#d6d6d6">24.12.2016 16:05:36</text>
<text x="297.5" y="544.5" font-family="'DejaVu Sans','Liberation Sans',sans-serif" font-size="14" textLength="150.5" fill="#d6d6d6">24.12.2016 16:05:26</text>
<text x="297.5" y="644.5" font-family="'DejaVu Sans','Liberation Sans',sans-serif" font-size="14" textLength="150.5" fill="#d6d6d6">24.12.2016 16:05:17</text>
<text x="297.5" y="744.5" font-family="'DejaVu Sans','Liberation Sans',sans-serif" font-size="14" textLength="150.5" fill="#d6d6d6">24.12.2016 16:05:07</text>
<text x="297.5" y="844.5" font-family="'DejaVu Sans','Liberation Sans',sans-serif" font-size="14" textLength="150.5" fill="#d6d6d6">24.12.2016 16:04:58</text>
<rect x="577" y="506.5" width="117.5" height="31.5" rx="7" fill="#3a3a3a" opacity="0.9"/>
<text x="585.5" y="528" font-family="'DejaVu Sans','Liberation Sans',sans-serif" font-size="16" textLength="99.5" fill="#f0f0f0">147.336MHz</text>
<path d="M570 488.6 V503.4 L573.3 500.4 L576 505.4 L578.2 504.4 L575.5 499.4 L580.2 499 Z" fill="#fff" stroke="#000" stroke-width="0.9" stroke-linejoin="miter"/>
</svg>
<svg class="a" style="left:269px;top:849px" width="785" height="149.5" viewBox="269 849 785 149.5" font-family="'Liberation Sans',sans-serif" font-size="10.8">
<rect x="269" y="849" width="785" height="150" fill="#000"/>
<rect x="418" y="879" width="484.7" height="90.5" fill="#373737"/>
<path d="M396.5 879V969.5 M561.7 879V969.5 M726.9 879V969.5 M892.1 879V969.5 M297 879.5H1025 M297 901.5H1025 M297 924.5H1025 M297 946.5H1025" stroke="#868686" stroke-width="1" fill="none"/>
<path d="M426.6 969.3 L427.0 942.0 L427.9 968.0 L429.7 964.9 L431.1 969.3 L432.4 969.3 L433.8 969.3 L435.1 969.3 L436.5 969.3 L437.8 968.6 L438.5 949.6 L440.5 968.7 L441.9 969.3 L443.2 969.3 L444.6 969.3 L445.9 969.3 L447.3 969.3 L448.6 969.3 L450.0 969.3 L451.3 969.3 L452.7 963.6 L454.0 968.4 L455.4 968.7 L456.7 968.9 L458.1 967.5 L459.4 967.2 L460.8 968.4 L462.1 968.0 L463.5 967.9 L464.8 968.9 L466.2 969.0 L467.5 966.0 L468.9 966.5 L470.2 967.6 L471.6 968.9 L472.9 964.0 L474.3 966.7 L475.6 964.4 L477.0 968.3 L478.3 966.6 L479.7 966.8 L481.0 965.9 L483.0 957.0 L483.7 968.3 L485.1 965.0 L486.4 964.9 L487.8 968.4 L489.1 968.7 L490.5 968.7 L491.8 959.8 L493.2 968.9 L494.5 967.8 L495.9 968.6 L497.2 966.2 L498.6 968.1 L499.9 965.0 L501.3 968.9 L502.6 967.2 L504.0 964.3 L505.3 968.6 L506.7 965.6 L508.0 961.2 L509.4 966.4 L510.7 965.0 L512.1 968.7 L513.4 967.5 L514.8 968.6 L516.1 964.2 L517.5 968.1 L518.8 967.4 L520.2 955.0 L521.0 950.0 L522.9 964.8 L524.2 966.0 L525.5 934.0 L526.9 964.6 L528.3 958.5 L529.0 958.0 L531.0 967.5 L532.3 962.2 L533.7 965.2 L535.0 962.7 L536.4 963.6 L537.7 965.4 L539.1 966.3 L540.4 962.8 L541.8 965.0 L543.1 964.2 L544.5 967.0 L545.8 965.9 L547.0 958.0 L548.5 963.6 L549.9 965.6 L551.2 962.8 L552.6 965.1 L553.9 961.3 L555.3 956.2 L556.6 965.2 L558.0 965.8 L559.3 960.0 L560.7 963.5 L562.0 964.6 L563.4 963.0 L564.7 964.5 L566.1 963.9 L567.4 963.9 L568.8 968.0 L570.1 965.2 L571.5 966.0 L572.8 965.8 L574.2 966.2 L575.5 968.0 L576.9 967.0 L578.2 967.8 L579.6 965.8 L580.9 964.4 L582.3 965.4 L583.6 967.4 L585.0 966.5 L586.3 965.9 L587.7 967.2 L589.0 965.8 L590.4 965.5 L591.7 963.7 L593.1 962.9 L594.4 962.4 L595.8 966.9 L597.1 964.6 L598.5 957.7 L599.8 965.1 L600.5 949.0 L602.5 966.7 L603.9 965.6 L605.2 963.5 L606.6 966.1 L607.9 967.0 L609.3 958.1 L610.6 957.6 L612.0 965.4 L613.3 956.9 L614.7 966.2 L616.0 956.4 L617.4 966.3 L618.7 966.5 L620.1 966.2 L621.4 962.3 L622.8 967.0 L624.1 965.1 L625.5 963.9 L626.8 967.3 L628.2 956.0 L630.0 955.0 L630.9 964.2 L632.2 964.6 L633.6 964.0 L634.9 965.6 L636.3 966.2 L637.6 965.9 L639.0 963.4 L640.3 967.7 L641.7 964.4 L643.0 961.3 L644.4 966.4 L645.7 965.5 L647.1 963.6 L648.4 964.3 L649.8 966.2 L651.1 963.0 L652.5 965.3 L654.0 953.0 L655.2 964.2 L656.5 965.5 L657.9 961.8 L659.2 965.3 L660.6 965.8 L661.9 966.5 L663.3 964.0 L664.6 965.6 L666.0 962.6 L667.3 966.5 L668.7 955.8 L670.0 965.2 L672.0 957.0 L672.7 963.2 L674.1 964.9 L675.4 965.1 L676.8 966.4 L678.1 966.7 L679.5 965.9 L680.8 967.2 L682.2 968.2 L683.5 964.3 L684.9 962.7 L686.2 966.2 L687.6 964.8 L688.9 960.2 L690.3 954.5 L691.6 966.4 L693.0 964.2 L694.3 964.7 L695.7 966.2 L697.0 965.7 L698.4 966.2 L699.7 966.8 L701.1 964.5 L702.4 963.5 L703.8 966.5 L705.1 967.9 L706.5 965.5 L707.8 961.8 L709.2 965.3 L710.5 966.5 L712.0 958.0 L713.2 958.8 L714.6 967.5 L715.9 957.3 L717.3 963.7 L718.6 965.0 L720.0 966.9 L721.3 965.1 L722.7 966.9 L724.0 962.1 L725.4 963.1 L726.7 962.1 L728.1 964.6 L729.4 963.9 L730.8 968.1 L732.1 967.8 L733.5 961.5 L734.8 964.8 L736.2 964.4 L737.5 964.8 L738.9 966.6 L740.2 967.6 L741.6 966.2 L742.9 962.6 L744.3 967.0 L745.0 958.0 L747.0 966.5 L748.3 965.9 L749.7 964.8 L751.0 963.7 L752.4 964.3 L753.7 966.4 L755.1 965.8 L756.4 964.7 L757.8 967.8 L759.1 967.6 L760.5 967.7 L761.8 959.6 L763.2 967.8 L764.5 968.0 L765.9 967.4 L767.2 968.1 L768.0 957.0 L769.9 965.7 L771.3 968.5 L772.6 968.3 L774.0 966.1 L775.3 961.7 L776.7 966.3 L778.0 967.5 L779.4 959.4 L780.7 969.0 L782.1 968.8 L783.4 965.1 L784.8 967.6 L786.1 968.9 L787.5 966.9 L788.8 957.1 L790.2 967.1 L791.5 967.9 L793.3 949.0 L794.2 968.8 L795.6 963.0 L796.9 967.2 L798.3 961.9 L799.6 968.9 L801.0 968.9 L802.3 968.9 L803.7 968.2 L805.0 968.9 L806.4 963.3 L807.7 967.9 L809.1 967.8 L810.4 968.4 L811.8 967.8 L813.1 967.5 L814.5 968.6 L815.8 967.8 L817.2 967.6 L818.5 967.4 L819.9 965.1 L821.2 968.0 L822.6 968.6 L823.9 968.4 L825.3 966.6 L826.6 968.4 L828.0 968.9 L829.3 968.9 L830.7 967.6 L832.0 968.9 L833.4 968.9 L834.7 968.5 L836.1 968.8 L837.4 968.4 L838.8 967.7 L840.1 967.3 L841.5 967.6 L842.8 966.3 L844.2 964.0 L845.5 967.1 L846.9 966.3 L848.2 968.8 L849.6 968.7 L850.9 967.2 L852 969.5 L427 969.5Z" fill="#2e3656"/>
<path d="M426.6 969.3 L427.0 942.0 L427.9 968.0 L429.7 964.9 L431.1 969.3 L432.4 969.3 L433.8 969.3 L435.1 969.3 L436.5 969.3 L437.8 968.6 L438.5 949.6 L440.5 968.7 L441.9 969.3 L443.2 969.3 L444.6 969.3 L445.9 969.3 L447.3 969.3 L448.6 969.3 L450.0 969.3 L451.3 969.3 L452.7 963.6 L454.0 968.4 L455.4 968.7 L456.7 968.9 L458.1 967.5 L459.4 967.2 L460.8 968.4 L462.1 968.0 L463.5 967.9 L464.8 968.9 L466.2 969.0 L467.5 966.0 L468.9 966.5 L470.2 967.6 L471.6 968.9 L472.9 964.0 L474.3 966.7 L475.6 964.4 L477.0 968.3 L478.3 966.6 L479.7 966.8 L481.0 965.9 L483.0 957.0 L483.7 968.3 L485.1 965.0 L486.4 964.9 L487.8 968.4 L489.1 968.7 L490.5 968.7 L491.8 959.8 L493.2 968.9 L494.5 967.8 L495.9 968.6 L497.2 966.2 L498.6 968.1 L499.9 965.0 L501.3 968.9 L502.6 967.2 L504.0 964.3 L505.3 968.6 L506.7 965.6 L508.0 961.2 L509.4 966.4 L510.7 965.0 L512.1 968.7 L513.4 967.5 L514.8 968.6 L516.1 964.2 L517.5 968.1 L518.8 967.4 L520.2 955.0 L521.0 950.0 L522.9 964.8 L524.2 966.0 L525.5 934.0 L526.9 964.6 L528.3 958.5 L529.0 958.0 L531.0 967.5 L532.3 962.2 L533.7 965.2 L535.0 962.7 L536.4 963.6 L537.7 965.4 L539.1 966.3 L540.4 962.8 L541.8 965.0 L543.1 964.2 L544.5 967.0 L545.8 965.9 L547.0 958.0 L548.5 963.6 L549.9 965.6 L551.2 962.8 L552.6 965.1 L553.9 961.3 L555.3 956.2 L556.6 965.2 L558.0 965.8 L559.3 960.0 L560.7 963.5 L562.0 964.6 L563.4 963.0 L564.7 964.5 L566.1 963.9 L567.4 963.9 L568.8 968.0 L570.1 965.2 L571.5 966.0 L572.8 965.8 L574.2 966.2 L575.5 968.0 L576.9 967.0 L578.2 967.8 L579.6 965.8 L580.9 964.4 L582.3 965.4 L583.6 967.4 L585.0 966.5 L586.3 965.9 L587.7 967.2 L589.0 965.8 L590.4 965.5 L591.7 963.7 L593.1 962.9 L594.4 962.4 L595.8 966.9 L597.1 964.6 L598.5 957.7 L599.8 965.1 L600.5 949.0 L602.5 966.7 L603.9 965.6 L605.2 963.5 L606.6 966.1 L607.9 967.0 L609.3 958.1 L610.6 957.6 L612.0 965.4 L613.3 956.9 L614.7 966.2 L616.0 956.4 L617.4 966.3 L618.7 966.5 L620.1 966.2 L621.4 962.3 L622.8 967.0 L624.1 965.1 L625.5 963.9 L626.8 967.3 L628.2 956.0 L630.0 955.0 L630.9 964.2 L632.2 964.6 L633.6 964.0 L634.9 965.6 L636.3 966.2 L637.6 965.9 L639.0 963.4 L640.3 967.7 L641.7 964.4 L643.0 961.3 L644.4 966.4 L645.7 965.5 L647.1 963.6 L648.4 964.3 L649.8 966.2 L651.1 963.0 L652.5 965.3 L654.0 953.0 L655.2 964.2 L656.5 965.5 L657.9 961.8 L659.2 965.3 L660.6 965.8 L661.9 966.5 L663.3 964.0 L664.6 965.6 L666.0 962.6 L667.3 966.5 L668.7 955.8 L670.0 965.2 L672.0 957.0 L672.7 963.2 L674.1 964.9 L675.4 965.1 L676.8 966.4 L678.1 966.7 L679.5 965.9 L680.8 967.2 L682.2 968.2 L683.5 964.3 L684.9 962.7 L686.2 966.2 L687.6 964.8 L688.9 960.2 L690.3 954.5 L691.6 966.4 L693.0 964.2 L694.3 964.7 L695.7 966.2 L697.0 965.7 L698.4 966.2 L699.7 966.8 L701.1 964.5 L702.4 963.5 L703.8 966.5 L705.1 967.9 L706.5 965.5 L707.8 961.8 L709.2 965.3 L710.5 966.5 L712.0 958.0 L713.2 958.8 L714.6 967.5 L715.9 957.3 L717.3 963.7 L718.6 965.0 L720.0 966.9 L721.3 965.1 L722.7 966.9 L724.0 962.1 L725.4 963.1 L726.7 962.1 L728.1 964.6 L729.4 963.9 L730.8 968.1 L732.1 967.8 L733.5 961.5 L734.8 964.8 L736.2 964.4 L737.5 964.8 L738.9 966.6 L740.2 967.6 L741.6 966.2 L742.9 962.6 L744.3 967.0 L745.0 958.0 L747.0 966.5 L748.3 965.9 L749.7 964.8 L751.0 963.7 L752.4 964.3 L753.7 966.4 L755.1 965.8 L756.4 964.7 L757.8 967.8 L759.1 967.6 L760.5 967.7 L761.8 959.6 L763.2 967.8 L764.5 968.0 L765.9 967.4 L767.2 968.1 L768.0 957.0 L769.9 965.7 L771.3 968.5 L772.6 968.3 L774.0 966.1 L775.3 961.7 L776.7 966.3 L778.0 967.5 L779.4 959.4 L780.7 969.0 L782.1 968.8 L783.4 965.1 L784.8 967.6 L786.1 968.9 L787.5 966.9 L788.8 957.1 L790.2 967.1 L791.5 967.9 L793.3 949.0 L794.2 968.8 L795.6 963.0 L796.9 967.2 L798.3 961.9 L799.6 968.9 L801.0 968.9 L802.3 968.9 L803.7 968.2 L805.0 968.9 L806.4 963.3 L807.7 967.9 L809.1 967.8 L810.4 968.4 L811.8 967.8 L813.1 967.5 L814.5 968.6 L815.8 967.8 L817.2 967.6 L818.5 967.4 L819.9 965.1 L821.2 968.0 L822.6 968.6 L823.9 968.4 L825.3 966.6 L826.6 968.4 L828.0 968.9 L829.3 968.9 L830.7 967.6 L832.0 968.9 L833.4 968.9 L834.7 968.5 L836.1 968.8 L837.4 968.4 L838.8 967.7 L840.1 967.3 L841.5 967.6 L842.8 966.3 L844.2 964.0 L845.5 967.1 L846.9 966.3 L848.2 968.8 L849.6 968.7 L850.9 967.2" fill="none" stroke="#fff" stroke-width="1" stroke-linejoin="bevel"/>
<path d="M660.5 879V969.5" stroke="#e01818" stroke-width="1.3"/>
<path d="M297 879V970 M296.5 969.5H1025 M396.5 969.5V974.5 M561.7 969.5V974.5 M726.9 969.5V974.5 M892.1 969.5V974.5" stroke="#c4c4c4" stroke-width="1" fill="none"/>
<text x="298" y="868" fill="#fff" font-family="'Liberation Mono',monospace" font-size="12.3" textLength="81.5">IF Spectrum</text>
<text x="294.5" y="883.0" text-anchor="end" fill="#d6d6d6">-40</text>
<text x="294.5" y="905.5" text-anchor="end" fill="#d6d6d6">-50</text>
<text x="294.5" y="928.1" text-anchor="end" fill="#d6d6d6">-60</text>
<text x="294.5" y="950.6" text-anchor="end" fill="#d6d6d6">-70</text>
<text x="294.5" y="973.2" text-anchor="end" fill="#d6d6d6">-80</text>
<text x="396.5" y="987.6" text-anchor="middle" fill="#d6d6d6">147.425M</text>
<text x="561.7" y="987.6" text-anchor="middle" fill="#d6d6d6">147.430M</text>
<text x="726.9" y="987.6" text-anchor="middle" fill="#d6d6d6">147.435M</text>
<text x="892.1" y="987.6" text-anchor="middle" fill="#d6d6d6">147.440M</text>
</svg>
<svg class="a" style="left:1058px;top:849px" width="175" height="149.5" viewBox="1058 849 175 149.5" font-family="'Liberation Sans',sans-serif" font-size="10.8">
<defs><linearGradient id="ag" gradientUnits="userSpaceOnUse" x1="0" y1="903" x2="0" y2="969.5"><stop offset="0" stop-color="#8fa3ac"/><stop offset="0.22" stop-color="#6d93b4"/><stop offset="0.45" stop-color="#3d7fc6"/><stop offset="0.6" stop-color="#1c66c8"/><stop offset="0.75" stop-color="#0f3f98"/><stop offset="0.9" stop-color="#071c5c"/><stop offset="1" stop-color="#030a34"/></linearGradient></defs>
<rect x="1058" y="849" width="175" height="150" fill="#000"/>
<path d="M1088 879.5H1233 M1088 889.5H1233 M1088 899.5H1233 M1088 909.5H1233 M1088 919.5H1233 M1088 929.5H1233 M1088 939.5H1233 M1088 949.5H1233 M1088 959.5H1233 M1202.7 879V969.5" stroke="#747474" stroke-width="1" fill="none"/>
<clipPath id="ac"><path d="M1088.0 897.5 L1089.0 901.0 L1091.0 904.5 L1092.5 903.8 L1094.7 903.2 L1096.9 905.1 L1099.1 904.6 L1101.3 903.1 L1103.5 903.2 L1105.7 903.5 L1107.9 904.1 L1110.1 905.6 L1112.3 905.8 L1114.5 904.9 L1116.7 903.9 L1118.9 904.5 L1121.1 904.3 L1123.3 904.2 L1125.5 903.4 L1127.7 905.0 L1129.9 905.7 L1132.1 905.5 L1134.3 903.7 L1136.5 905.0 L1138.7 904.0 L1140.9 905.5 L1143.1 904.8 L1145.3 906.2 L1147.5 905.8 L1149.7 904.0 L1151.9 904.6 L1154.1 906.3 L1156.3 905.0 L1158.5 905.0 L1160.7 905.0 L1162.9 905.9 L1165.1 906.4 L1167.3 905.3 L1169.5 906.6 L1171.7 905.6 L1173.9 904.2 L1176.1 906.2 L1178.3 905.2 L1180.5 904.2 L1182.7 906.8 L1184.9 904.2 L1187.1 905.7 L1189.3 905.5 L1191.5 906.6 L1193.7 905.3 L1195.9 904.8 L1198.1 905.0 L1200.3 904.8 L1202.5 905.8 L1204.7 905.3 L1206.9 906.4 L1209.1 905.0 L1211.3 905.4 L1213.5 905.1 L1215.7 907.2 L1217.9 906.8 L1220.1 906.9 L1222.3 906.2 L1224.5 905.7 L1226.7 905.0 L1228.9 906.9 L1231.1 906.0 L1233.3 904.7 L1234 969.5 L1088 969.5Z"/></clipPath>
<path d="M1088.0 897.5 L1089.0 901.0 L1091.0 904.5 L1092.5 903.8 L1094.7 903.2 L1096.9 905.1 L1099.1 904.6 L1101.3 903.1 L1103.5 903.2 L1105.7 903.5 L1107.9 904.1 L1110.1 905.6 L1112.3 905.8 L1114.5 904.9 L1116.7 903.9 L1118.9 904.5 L1121.1 904.3 L1123.3 904.2 L1125.5 903.4 L1127.7 905.0 L1129.9 905.7 L1132.1 905.5 L1134.3 903.7 L1136.5 905.0 L1138.7 904.0 L1140.9 905.5 L1143.1 904.8 L1145.3 906.2 L1147.5 905.8 L1149.7 904.0 L1151.9 904.6 L1154.1 906.3 L1156.3 905.0 L1158.5 905.0 L1160.7 905.0 L1162.9 905.9 L1165.1 906.4 L1167.3 905.3 L1169.5 906.6 L1171.7 905.6 L1173.9 904.2 L1176.1 906.2 L1178.3 905.2 L1180.5 904.2 L1182.7 906.8 L1184.9 904.2 L1187.1 905.7 L1189.3 905.5 L1191.5 906.6 L1193.7 905.3 L1195.9 904.8 L1198.1 905.0 L1200.3 904.8 L1202.5 905.8 L1204.7 905.3 L1206.9 906.4 L1209.1 905.0 L1211.3 905.4 L1213.5 905.1 L1215.7 907.2 L1217.9 906.8 L1220.1 906.9 L1222.3 906.2 L1224.5 905.7 L1226.7 905.0 L1228.9 906.9 L1231.1 906.0 L1233.3 904.7 L1234 969.5 L1088 969.5Z" fill="url(#ag)"/>
<path d="M1088 879.5H1233 M1088 889.5H1233 M1088 899.5H1233 M1088 909.5H1233 M1088 919.5H1233 M1088 929.5H1233 M1088 939.5H1233 M1088 949.5H1233 M1088 959.5H1233 M1202.7 879V969.5" stroke="#d8ecff" stroke-opacity="0.26" stroke-width="1" fill="none" clip-path="url(#ac)"/>
<path d="M1088.0 897.5 L1089.0 901.0 L1091.0 904.5 L1092.5 903.8 L1094.7 903.2 L1096.9 905.1 L1099.1 904.6 L1101.3 903.1 L1103.5 903.2 L1105.7 903.5 L1107.9 904.1 L1110.1 905.6 L1112.3 905.8 L1114.5 904.9 L1116.7 903.9 L1118.9 904.5 L1121.1 904.3 L1123.3 904.2 L1125.5 903.4 L1127.7 905.0 L1129.9 905.7 L1132.1 905.5 L1134.3 903.7 L1136.5 905.0 L1138.7 904.0 L1140.9 905.5 L1143.1 904.8 L1145.3 906.2 L1147.5 905.8 L1149.7 904.0 L1151.9 904.6 L1154.1 906.3 L1156.3 905.0 L1158.5 905.0 L1160.7 905.0 L1162.9 905.9 L1165.1 906.4 L1167.3 905.3 L1169.5 906.6 L1171.7 905.6 L1173.9 904.2 L1176.1 906.2 L1178.3 905.2 L1180.5 904.2 L1182.7 906.8 L1184.9 904.2 L1187.1 905.7 L1189.3 905.5 L1191.5 906.6 L1193.7 905.3 L1195.9 904.8 L1198.1 905.0 L1200.3 904.8 L1202.5 905.8 L1204.7 905.3 L1206.9 906.4 L1209.1 905.0 L1211.3 905.4 L1213.5 905.1 L1215.7 907.2 L1217.9 906.8 L1220.1 906.9 L1222.3 906.2 L1224.5 905.7 L1226.7 905.0 L1228.9 906.9 L1231.1 906.0 L1233.3 904.7" fill="none" stroke="#fff" stroke-width="1.1"/>
<path d="M1088.5 879V975 M1088 969.5H1233 M1202.7 969.5V975" stroke="#b4b4b4" stroke-width="1" fill="none"/>
<text x="1090" y="868" fill="#fff" font-family="'Liberation Mono',monospace" font-size="12.3" textLength="104">Audio Spectrum</text>
<text x="1086" y="883.0" text-anchor="end" fill="#d6d6d6">0</text>
<text x="1086" y="893.0" text-anchor="end" fill="#d6d6d6">-10</text>
<text x="1086" y="903.1" text-anchor="end" fill="#d6d6d6">-20</text>
<text x="1086" y="913.1" text-anchor="end" fill="#d6d6d6">-30</text>
<text x="1086" y="923.2" text-anchor="end" fill="#d6d6d6">-40</text>
<text x="1086" y="933.2" text-anchor="end" fill="#d6d6d6">-50</text>
<text x="1086" y="943.2" text-anchor="end" fill="#d6d6d6">-60</text>
<text x="1086" y="953.3" text-anchor="end" fill="#d6d6d6">-70</text>
<text x="1086" y="963.3" text-anchor="end" fill="#d6d6d6">-80</text>
<text x="1086" y="973.4" text-anchor="end" fill="#d6d6d6">-90</text>
<text x="1088" y="987.6" text-anchor="middle" fill="#d6d6d6">DC</text><text x="1202" y="987.6" text-anchor="middle" fill="#d6d6d6">2.5k</text>
</svg>
</div>
</body></html>
